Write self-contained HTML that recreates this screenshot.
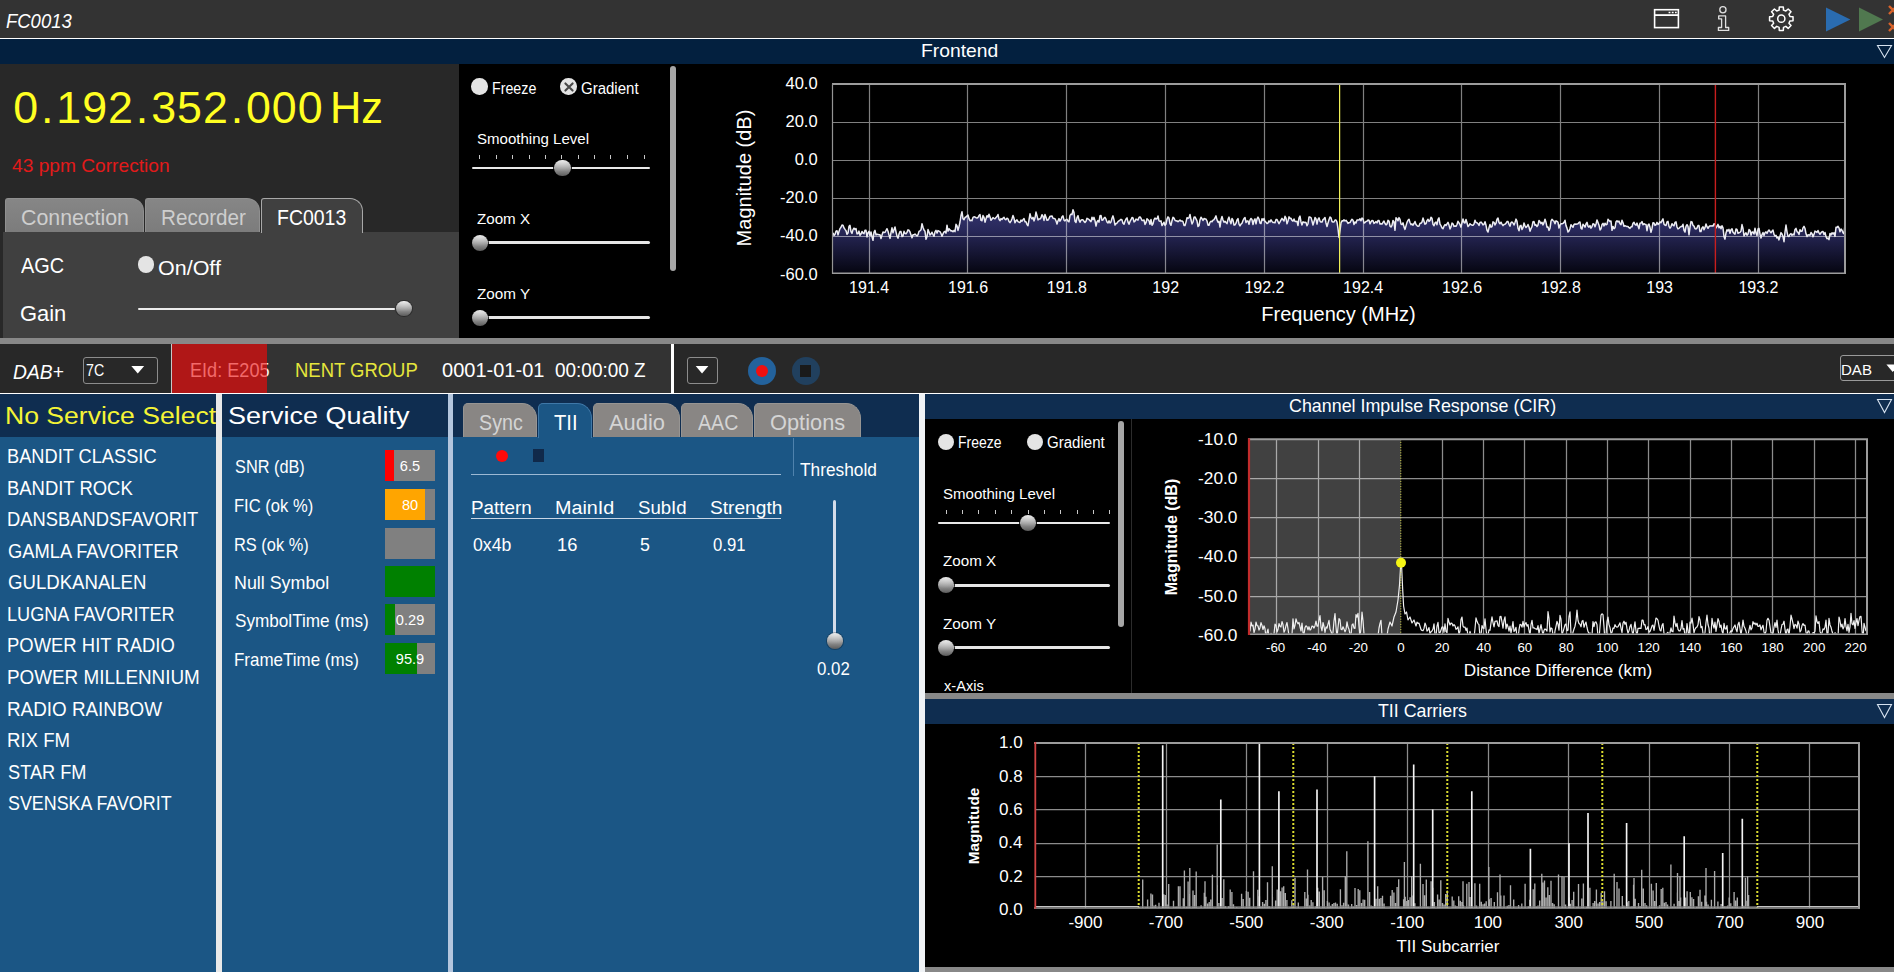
<!DOCTYPE html>
<html><head><meta charset="utf-8"><title>DAB</title><style>
html,body{margin:0;padding:0;}
body{width:1894px;height:972px;overflow:hidden;background:#000;position:relative;font-family:"Liberation Sans",sans-serif;}
#r{position:absolute;left:0;top:0;width:1894px;height:972px;overflow:hidden;background:#000;}
#r div,#r svg{position:absolute;display:block;}
#r div.t,#r span.t{position:absolute;white-space:nowrap;line-height:1;transform-origin:0 50%;}
#r div.t span{position:static;}
</style></head><body><div id="r">
<!-- sec1 -->
<div style="left:0px;top:0px;width:1894px;height:38px;background:#333;"></div>
<div style="left:0px;top:38px;width:1894px;height:1px;background:#fff;"></div>
<span class="t" style="left:6.43px;top:11.59px;font-size:19.5px;color:#fff;transform:scaleX(0.9468);font-style:italic;">FC0013</span>
<div style="left:0px;top:39px;width:1894px;height:25px;background:#03203f;"></div>
<span class="t" style="left:921.43px;top:40.92px;font-size:19px;color:#fff;transform:scaleX(1.0150);">Frontend</span>
<div style="left:0px;top:64px;width:459px;height:274px;background:#282828;"></div>
<div style="left:3px;top:232px;width:456px;height:106px;background:#404040;"></div>
<div class="t" style="left:12.78px;top:85.18px;font-size:44.8px;color:#ffff22;"><span style="display:inline-block;width:25.85px;text-align:center">0</span><span style="display:inline-block;width:17.3px;text-align:center">.</span><span style="display:inline-block;width:25.85px;text-align:center">1</span><span style="display:inline-block;width:25.85px;text-align:center">9</span><span style="display:inline-block;width:25.85px;text-align:center">2</span><span style="display:inline-block;width:17.3px;text-align:center">.</span><span style="display:inline-block;width:25.85px;text-align:center">3</span><span style="display:inline-block;width:25.85px;text-align:center">5</span><span style="display:inline-block;width:25.85px;text-align:center">2</span><span style="display:inline-block;width:17.3px;text-align:center">.</span><span style="display:inline-block;width:25.85px;text-align:center">0</span><span style="display:inline-block;width:25.85px;text-align:center">0</span><span style="display:inline-block;width:25.85px;text-align:center">0</span></div>
<span class="t" style="left:330.26px;top:85.18px;font-size:44.8px;color:#ffff22;transform:scaleX(0.9693);">Hz</span>
<span class="t" style="left:11.60px;top:155.62px;font-size:19px;color:#e21a1a;transform:scaleX(1.0084);">43 ppm Correction</span>
<div style="left:5px;top:197.9px;width:138.6px;height:34.099999999999994px;background:linear-gradient(#868686,#7c7c7c);border:1px solid #909090;border-bottom:none;border-radius:3px 13px 0 0;box-sizing:border-box;"></div>
<div style="left:144.6px;top:197.9px;width:115.20000000000002px;height:34.099999999999994px;background:linear-gradient(#868686,#7c7c7c);border:1px solid #909090;border-bottom:none;border-radius:3px 13px 0 0;box-sizing:border-box;"></div>
<div style="left:261.2px;top:197.9px;width:102.0px;height:35.099999999999994px;background:#404040;border:1px solid #a8a8a8;border-bottom:none;border-radius:3px 13px 0 0;box-sizing:border-box;"></div>
<span class="t" style="left:20.96px;top:206.92px;font-size:21.6px;color:#cecece;transform:scaleX(0.9883);">Connection</span>
<span class="t" style="left:160.53px;top:206.92px;font-size:21.6px;color:#cecece;transform:scaleX(0.9568);">Recorder</span>
<span class="t" style="left:276.82px;top:206.92px;font-size:21.6px;color:#fff;transform:scaleX(0.9016);">FC0013</span>
<span class="t" style="left:20.60px;top:254.55px;font-size:22.5px;color:#fff;transform:scaleX(0.8852);">AGC</span>
<div style="left:137.75px;top:256.25px;width:16.5px;height:16.5px;border-radius:50%;background:#e4e4e4;"></div>
<span class="t" style="left:158.03px;top:256.52px;font-size:21px;color:#fff;transform:scaleX(1.0231);">On/Off</span>
<span class="t" style="left:19.53px;top:303.05px;font-size:22.5px;color:#fff;transform:scaleX(0.9733);">Gain</span>
<div style="left:137.7px;top:307.7px;width:257.4px;height:2.7px;background:#ececec;border-radius:1.3px;"></div>
<div style="left:396.4px;top:301.1px;width:15.4px;height:15.4px;border-radius:50%;box-shadow:0 0 0 1px rgba(0,0,0,0.3);background:radial-gradient(ellipse 90% 60% at 50% 12%,rgba(255,255,255,0.35) 0%,rgba(255,255,255,0) 100%),linear-gradient(#e2e2e2 0%,#c2c2c2 22%,#989898 55%,#5c5c5c 100%);"></div>
<div style="left:471.25px;top:78.25px;width:16.5px;height:16.5px;border-radius:50%;background:#e4e4e4;"></div><span class="t" style="left:491.66px;top:80.59px;font-size:15.6px;color:#fff;transform:scaleX(0.9132);">Freeze</span><div style="left:560.35px;top:78.25px;width:16.5px;height:16.5px;border-radius:50%;background:#e4e4e4;"></div><svg style="left:562.6px;top:80.5px" width="12" height="12" viewBox="-6 -6 12 12"><path d="M-3.6 -3.6L3.6 3.6M3.6 -3.6L-3.6 3.6" stroke="#484848" stroke-width="2.1" stroke-linecap="round"/></svg><span class="t" style="left:581.08px;top:80.59px;font-size:15.6px;color:#fff;transform:scaleX(0.9627);">Gradient</span><span class="t" style="left:476.95px;top:130.80px;font-size:15px;color:#fff;transform:scaleX(1.0027);">Smoothing Level</span>
<div style="left:479px;top:155px;width:1px;height:4.2px;background:#c8c8c8;"></div>
<div style="left:496px;top:155px;width:1px;height:4.2px;background:#c8c8c8;"></div>
<div style="left:512px;top:155px;width:1px;height:4.2px;background:#c8c8c8;"></div>
<div style="left:529px;top:155px;width:1px;height:4.2px;background:#c8c8c8;"></div>
<div style="left:545px;top:155px;width:1px;height:4.2px;background:#c8c8c8;"></div>
<div style="left:561px;top:155px;width:1px;height:4.2px;background:#c8c8c8;"></div>
<div style="left:578px;top:155px;width:1px;height:4.2px;background:#c8c8c8;"></div>
<div style="left:594px;top:155px;width:1px;height:4.2px;background:#c8c8c8;"></div>
<div style="left:610px;top:155px;width:1px;height:4.2px;background:#c8c8c8;"></div>
<div style="left:627px;top:155px;width:1px;height:4.2px;background:#c8c8c8;"></div>
<div style="left:644px;top:155px;width:1px;height:4.2px;background:#c8c8c8;"></div>
<div style="left:471.6px;top:166.55px;width:178.4px;height:2.5px;background:#e8e8e8;border-radius:1.25px;"></div>
<div style="left:554.0px;top:159.7px;width:16.8px;height:16.8px;border-radius:50%;box-shadow:0 0 0 1px rgba(0,0,0,0.9);background:radial-gradient(ellipse 90% 60% at 50% 12%,rgba(255,255,255,0.35) 0%,rgba(255,255,255,0) 100%),linear-gradient(#e2e2e2 0%,#c2c2c2 22%,#989898 55%,#5c5c5c 100%);"></div>
<span class="t" style="left:476.95px;top:211.10px;font-size:15px;color:#fff;transform:scaleX(1.0106);">Zoom X</span>
<div style="left:480px;top:241.1px;width:170px;height:3px;background:#e6e6e6;border-radius:1.5px;"></div>
<div style="left:472.2px;top:235.0px;width:15.9px;height:15.9px;border-radius:50%;box-shadow:0 0 0 1px rgba(0,0,0,0.9);background:radial-gradient(ellipse 90% 60% at 50% 12%,rgba(255,255,255,0.35) 0%,rgba(255,255,255,0) 100%),linear-gradient(#e2e2e2 0%,#c2c2c2 22%,#989898 55%,#5c5c5c 100%);"></div>
<span class="t" style="left:476.94px;top:286.00px;font-size:15px;color:#fff;transform:scaleX(1.0155);">Zoom Y</span>
<div style="left:480px;top:316px;width:170px;height:3px;background:#e6e6e6;border-radius:1.5px;"></div>
<div style="left:472.2px;top:309.9px;width:15.9px;height:15.9px;border-radius:50%;box-shadow:0 0 0 1px rgba(0,0,0,0.9);background:radial-gradient(ellipse 90% 60% at 50% 12%,rgba(255,255,255,0.35) 0%,rgba(255,255,255,0) 100%),linear-gradient(#e2e2e2 0%,#c2c2c2 22%,#989898 55%,#5c5c5c 100%);"></div>
<div style="left:670.3px;top:65.8px;width:6.2px;height:205.4px;background:#a6a6a6;border-radius:3.1px;"></div>
<div style="left:0px;top:338px;width:1894px;height:6px;background:#888;"></div>
<!-- sec2 -->
<div style="left:0px;top:344px;width:1894px;height:49px;background:#282828;"></div>
<div style="left:171px;top:344px;width:1px;height:49px;background:#c8c8c8;"></div>
<div style="left:172px;top:344px;width:95.4px;height:49px;background:#b01717;"></div>
<div style="left:267.4px;top:344px;width:403.6px;height:49px;background:#333;"></div>
<div style="left:671px;top:344px;width:3.2px;height:49px;background:#fff;"></div>
<div style="left:0px;top:393px;width:1894px;height:1px;background:#fff;"></div>
<span class="t" style="left:12.64px;top:362.39px;font-size:20.8px;color:#fff;transform:scaleX(0.9254);font-style:italic;">DAB+</span>
<div style="left:83px;top:357.3px;width:75px;height:26.4px;box-sizing:border-box;border:1px solid #8c8c8c;border-radius:3px;background:#282828;"></div>
<span class="t" style="left:86.31px;top:361.57px;font-size:17.4px;color:#fff;transform:scaleX(0.8173);">7C</span>
<svg style="left:130px;top:364px" width="16" height="12" viewBox="130 364 16 12"><path d="M131.3 366H144.2L137.75 373.6Z" fill="#fff"/></svg>
<div style="left:172px;top:344px;width:95.4px;height:49px;overflow:hidden;background:none;"><span class="t" style="left:18.33px;top:16.23px;font-size:20.4px;color:#f26a6a;transform:scaleX(0.8886);">EId: E205</span></div>
<div style="left:267.4px;top:344px;width:10px;height:49px;overflow:hidden;background:none;"><span class="t" style="left:-77.07px;top:16.23px;font-size:20.4px;color:#f4f4f4;transform:scaleX(0.8886);">EId: E205</span></div>
<span class="t" style="left:294.52px;top:360.26px;font-size:20.6px;color:#e6e63c;transform:scaleX(0.8965);">NENT GROUP</span>
<span class="t" style="left:441.52px;top:360.26px;font-size:20.6px;color:#fff;transform:scaleX(0.9720);">0001-01-01</span>
<span class="t" style="left:554.86px;top:360.26px;font-size:20.6px;color:#fff;transform:scaleX(0.9212);">00:00:00 Z</span>
<div style="left:687.4px;top:357.3px;width:30.4px;height:26.4px;box-sizing:border-box;border:1px solid #8c8c8c;border-radius:3px;background:#282828;"></div>
<svg style="left:694px;top:364px" width="16" height="12" viewBox="694 364 16 12"><path d="M695.7 366H708.4L702.05 373.6Z" fill="#fff"/></svg>
<div style="left:747.9px;top:356.8px;width:28.4px;height:28.4px;border-radius:50%;background:#23629c;"></div>
<div style="left:755.8px;top:364.7px;width:12.6px;height:12.6px;border-radius:50%;background:#f01010;"></div>
<div style="left:791.5px;top:356.8px;width:28.4px;height:28.4px;border-radius:50%;background:#21405e;"></div>
<div style="left:800px;top:365.3px;width:11.4px;height:11.4px;background:#1a1a1a;"></div>
<div style="left:1839.5px;top:355.3px;width:70px;height:26.2px;box-sizing:border-box;border:1px solid #9a9a9a;border-radius:3px;background:#282828;"></div>
<span class="t" style="left:1840.80px;top:361.60px;font-size:15px;color:#fff;transform:scaleX(1.0035);">DAB</span>
<svg style="left:1884px;top:362px" width="10" height="12" viewBox="1884 362 10 12"><path d="M1886.4 364.6H1899L1892.7 372Z" fill="#fff"/></svg>
<!-- sec3 -->
<div style="left:0px;top:394px;width:216px;height:42.6px;background:#0f2d50;"></div>
<div style="left:0px;top:436.6px;width:216px;height:535.4px;background:#1b5685;"></div>
<div style="left:216px;top:394px;width:6.2px;height:578px;background:#e9e9e9;"></div>
<div style="left:222.2px;top:394px;width:226.2px;height:42.6px;background:#0f2d50;"></div>
<div style="left:222.2px;top:436.6px;width:226.2px;height:535.4px;background:#1b5685;"></div>
<div style="left:448.4px;top:394px;width:4.9px;height:578px;background:#b4c6de;"></div>
<div style="left:453.3px;top:394px;width:465.5px;height:42.6px;background:#0f2d50;"></div>
<div style="left:453.3px;top:436.6px;width:465.5px;height:535.4px;background:#1b5685;"></div>
<div style="left:918.8px;top:394px;width:6.2px;height:578px;background:#f0f3f6;"></div>
<div style="left:0;top:394px;width:216px;height:42px;overflow:hidden;background:none;"><span class="t" style="left:4.66px;top:10.21px;font-size:24.8px;color:#f4f436;transform:scaleX(1.0710);">No Service Selected</span></div>
<span class="t" style="left:227.80px;top:404.21px;font-size:24.8px;color:#fff;transform:scaleX(1.0888);">Service Quality</span>
<span class="t" style="left:7.04px;top:447.18px;font-size:19.4px;color:#fff;transform:scaleX(0.9398);">BANDIT CLASSIC</span>
<span class="t" style="left:7.03px;top:478.73px;font-size:19.4px;color:#fff;transform:scaleX(0.9510);">BANDIT ROCK</span>
<span class="t" style="left:7.03px;top:510.28px;font-size:19.4px;color:#fff;transform:scaleX(0.9458);">DANSBANDSFAVORIT</span>
<span class="t" style="left:7.60px;top:541.83px;font-size:19.4px;color:#fff;transform:scaleX(0.9444);">GAMLA FAVORITER</span>
<span class="t" style="left:7.59px;top:573.38px;font-size:19.4px;color:#fff;transform:scaleX(0.9588);">GULDKANALEN</span>
<span class="t" style="left:7.05px;top:604.93px;font-size:19.4px;color:#fff;transform:scaleX(0.9337);">LUGNA FAVORITER</span>
<span class="t" style="left:7.03px;top:636.48px;font-size:19.4px;color:#fff;transform:scaleX(0.9514);">POWER HIT RADIO</span>
<span class="t" style="left:6.99px;top:668.03px;font-size:19.4px;color:#fff;transform:scaleX(0.9723);">POWER MILLENNIUM</span>
<span class="t" style="left:6.99px;top:699.58px;font-size:19.4px;color:#fff;transform:scaleX(0.9721);">RADIO RAINBOW</span>
<span class="t" style="left:7.01px;top:731.13px;font-size:19.4px;color:#fff;transform:scaleX(0.9593);">RIX FM</span>
<span class="t" style="left:7.70px;top:762.68px;font-size:19.4px;color:#fff;transform:scaleX(0.9385);">STAR FM</span>
<span class="t" style="left:7.72px;top:794.23px;font-size:19.4px;color:#fff;transform:scaleX(0.9217);">SVENSKA FAVORIT</span>
<span class="t" style="left:234.78px;top:458.09px;font-size:18.2px;color:#fff;transform:scaleX(0.8966);">SNR (dB)</span>
<div style="left:385px;top:450px;width:49.8px;height:31px;background:#808080;"></div>
<div style="left:385px;top:450px;width:8.7px;height:31px;background:#ff0000;"></div>
<span class="t" style="left:399.78px;top:459.04px;font-size:14.6px;color:#fff;">6.5</span>
<span class="t" style="left:234.18px;top:497.29px;font-size:18.2px;color:#fff;transform:scaleX(0.9111);">FIC (ok %)</span>
<div style="left:385px;top:489.2px;width:49.8px;height:31px;background:#808080;"></div>
<div style="left:385px;top:489.2px;width:40px;height:31px;background:#ffa500;"></div>
<span class="t" style="left:401.88px;top:498.24px;font-size:14.6px;color:#fff;">80</span>
<span class="t" style="left:234.19px;top:535.99px;font-size:18.2px;color:#fff;transform:scaleX(0.9023);">RS (ok %)</span>
<div style="left:385px;top:527.9px;width:49.8px;height:31px;background:#808080;"></div>
<span class="t" style="left:234.08px;top:573.89px;font-size:18.2px;color:#fff;transform:scaleX(0.9815);">Null Symbol</span>
<div style="left:385px;top:565.8px;width:49.8px;height:31px;background:#808080;"></div>
<div style="left:385px;top:565.8px;width:49.8px;height:31px;background:#008000;"></div>
<span class="t" style="left:234.75px;top:612.09px;font-size:18.2px;color:#fff;transform:scaleX(0.9429);">SymbolTime (ms)</span>
<div style="left:385px;top:604px;width:49.8px;height:31px;background:#808080;"></div>
<div style="left:385px;top:604px;width:10px;height:31px;background:#008000;"></div>
<span class="t" style="left:395.85px;top:613.04px;font-size:14.6px;color:#fff;">0.29</span>
<span class="t" style="left:234.15px;top:650.69px;font-size:18.2px;color:#fff;transform:scaleX(0.9333);">FrameTime (ms)</span>
<div style="left:385px;top:642.6px;width:49.8px;height:31px;background:#808080;"></div>
<div style="left:385px;top:642.6px;width:32px;height:31px;background:#008000;"></div>
<span class="t" style="left:395.80px;top:651.64px;font-size:14.6px;color:#fff;">95.9</span>
<div style="left:463.1px;top:402.9px;width:74.3px;height:33.7px;background:#898684;border:1px solid #979593;border-bottom:none;border-radius:5px 15px 0 0;box-sizing:border-box;"></div>
<div style="left:593px;top:402.9px;width:87.0px;height:33.7px;background:#898684;border:1px solid #979593;border-bottom:none;border-radius:5px 15px 0 0;box-sizing:border-box;"></div>
<div style="left:681px;top:402.9px;width:71.9px;height:33.7px;background:#898684;border:1px solid #979593;border-bottom:none;border-radius:5px 15px 0 0;box-sizing:border-box;"></div>
<div style="left:753.7px;top:402.9px;width:107.3px;height:33.7px;background:#898684;border:1px solid #979593;border-bottom:none;border-radius:5px 15px 0 0;box-sizing:border-box;"></div>
<div style="left:538.1px;top:402.9px;width:54.4px;height:34.7px;background:#1b5685;border:1px solid #3f78a8;border-bottom:none;border-radius:5px 15px 0 0;box-sizing:border-box;"></div>
<span class="t" style="left:478.54px;top:411.65px;font-size:21.8px;color:#d4d4d4;transform:scaleX(0.9031);">Sync</span>
<span class="t" style="left:553.98px;top:411.65px;font-size:21.8px;color:#fff;transform:scaleX(0.9281);">TII</span>
<span class="t" style="left:609.30px;top:411.65px;font-size:21.8px;color:#d4d4d4;transform:scaleX(1.0036);">Audio</span>
<span class="t" style="left:697.80px;top:411.65px;font-size:21.8px;color:#d4d4d4;transform:scaleX(0.8990);">AAC</span>
<span class="t" style="left:769.50px;top:411.65px;font-size:21.8px;color:#d4d4d4;transform:scaleX(1.0014);">Options</span>
<div style="left:495.9px;top:449.5px;width:12px;height:12px;border-radius:50%;background:#ff0a0a;"></div>
<div style="left:533px;top:449px;width:10.8px;height:13px;background:#10294a;"></div>
<div style="left:471px;top:474px;width:310.4px;height:1px;background:#9cb9d4;"></div>
<div style="left:793.2px;top:438px;width:1px;height:37.5px;background:#4f82ad;"></div>
<span class="t" style="left:800.44px;top:459.65px;font-size:19.2px;color:#fff;transform:scaleX(0.9015);">Threshold</span>
<span class="t" style="left:470.69px;top:499.19px;font-size:18.8px;color:#fff;transform:scaleX(1.0052);">Pattern</span>
<span class="t" style="left:554.72px;top:499.19px;font-size:18.8px;color:#fff;transform:scaleX(1.0503);">MainId</span>
<span class="t" style="left:637.66px;top:499.19px;font-size:18.8px;color:#fff;transform:scaleX(0.9904);">SubId</span>
<span class="t" style="left:710.13px;top:499.19px;font-size:18.8px;color:#fff;transform:scaleX(1.0188);">Strength</span>
<div style="left:471px;top:518.4px;width:310.4px;height:1px;background:#c9d6e6;"></div>
<span class="t" style="left:473.33px;top:536.42px;font-size:18.4px;color:#fff;transform:scaleX(0.9623);">0x4b</span>
<span class="t" style="left:557.41px;top:536.42px;font-size:18.4px;color:#fff;transform:scaleX(0.9945);">16</span>
<span class="t" style="left:640.22px;top:536.42px;font-size:18.4px;color:#fff;transform:scaleX(0.9659);">5</span>
<span class="t" style="left:712.66px;top:536.42px;font-size:18.4px;color:#fff;transform:scaleX(0.9080);">0.91</span>
<div style="left:833px;top:500.4px;width:3px;height:134px;background:#d4dcea;border-radius:1.5px;"></div>
<div style="left:827.3px;top:633.4px;width:15.4px;height:15.4px;border-radius:50%;box-shadow:0 0 0 1px rgba(0,0,0,0.25);background:radial-gradient(ellipse 90% 60% at 50% 12%,rgba(255,255,255,0.35) 0%,rgba(255,255,255,0) 100%),linear-gradient(#e2e2e2 0%,#c2c2c2 22%,#989898 55%,#5c5c5c 100%);"></div>
<span class="t" style="left:816.64px;top:660.26px;font-size:18px;color:#fff;transform:scaleX(0.9357);">0.02</span>
<!-- sec4 -->
<div style="left:925px;top:394px;width:969px;height:25px;background:#0f2d50;"></div>
<span class="t" style="left:1288.93px;top:396.72px;font-size:18.4px;color:#fff;transform:scaleX(0.9714);">Channel Impulse Response (CIR)</span>
<div style="left:925px;top:693px;width:969px;height:6px;background:#888;"></div>
<div style="left:925px;top:699px;width:969px;height:25px;background:#0f2d50;"></div>
<span class="t" style="left:1378.11px;top:701.92px;font-size:18.4px;color:#fff;transform:scaleX(0.9676);">TII Carriers</span>
<div style="left:925px;top:967px;width:969px;height:5px;background:#888;"></div>
<div style="left:1131px;top:419px;width:1px;height:274px;background:#2c2c2c;"></div>
<svg style="left:1875px;top:43px" width="19" height="17" viewBox="1875 43 19 17"><path d="M1877.5 45.5H1891.5L1884.5 57.5Z" fill="none" stroke="#d6e2f0" stroke-width="1.1"/></svg>
<svg style="left:1875px;top:397px" width="19" height="18" viewBox="1875 397 19 18"><path d="M1877.5 399.5H1891.5L1884.5 412.5Z" fill="none" stroke="#d6e2f0" stroke-width="1.1"/></svg>
<svg style="left:1875px;top:702px" width="19" height="18" viewBox="1875 702 19 18"><path d="M1877.5 704.5H1891.5L1884.5 717.5Z" fill="none" stroke="#d6e2f0" stroke-width="1.1"/></svg>
<div style="left:938.00px;top:433.70px;width:16px;height:16px;border-radius:50%;background:#e4e4e4;"></div>
<span class="t" style="left:958.38px;top:434.59px;font-size:15.6px;color:#fff;transform:scaleX(0.8960);">Freeze</span>
<div style="left:1026.90px;top:433.70px;width:16px;height:16px;border-radius:50%;background:#e4e4e4;"></div>
<span class="t" style="left:1047.28px;top:434.59px;font-size:15.6px;color:#fff;transform:scaleX(0.9644);">Gradient</span>
<span class="t" style="left:943.25px;top:485.90px;font-size:15px;color:#fff;transform:scaleX(1.0027);">Smoothing Level</span>
<div style="left:946px;top:509.6px;width:1px;height:4.2px;background:#c8c8c8;"></div>
<div style="left:962px;top:509.6px;width:1px;height:4.2px;background:#c8c8c8;"></div>
<div style="left:978px;top:509.6px;width:1px;height:4.2px;background:#c8c8c8;"></div>
<div style="left:995px;top:509.6px;width:1px;height:4.2px;background:#c8c8c8;"></div>
<div style="left:1011px;top:509.6px;width:1px;height:4.2px;background:#c8c8c8;"></div>
<div style="left:1028px;top:509.6px;width:1px;height:4.2px;background:#c8c8c8;"></div>
<div style="left:1044px;top:509.6px;width:1px;height:4.2px;background:#c8c8c8;"></div>
<div style="left:1060px;top:509.6px;width:1px;height:4.2px;background:#c8c8c8;"></div>
<div style="left:1077px;top:509.6px;width:1px;height:4.2px;background:#c8c8c8;"></div>
<div style="left:1093px;top:509.6px;width:1px;height:4.2px;background:#c8c8c8;"></div>
<div style="left:1109px;top:509.6px;width:1px;height:4.2px;background:#c8c8c8;"></div>
<div style="left:938px;top:521.6px;width:172px;height:2.5px;background:#e8e8e8;border-radius:1.25px;"></div>
<div style="left:1019.7px;top:514.7px;width:16.8px;height:16.8px;border-radius:50%;box-shadow:0 0 0 1px rgba(0,0,0,0.9);background:radial-gradient(ellipse 90% 60% at 50% 12%,rgba(255,255,255,0.35) 0%,rgba(255,255,255,0) 100%),linear-gradient(#e2e2e2 0%,#c2c2c2 22%,#989898 55%,#5c5c5c 100%);"></div>
<span class="t" style="left:943.24px;top:553.30px;font-size:15px;color:#fff;transform:scaleX(1.0126);">Zoom X</span>
<div style="left:946px;top:583.8px;width:164px;height:3px;background:#e6e6e6;border-radius:1.5px;"></div>
<div style="left:938.2px;top:577.4px;width:15.9px;height:15.9px;border-radius:50%;box-shadow:0 0 0 1px rgba(0,0,0,0.9);background:radial-gradient(ellipse 90% 60% at 50% 12%,rgba(255,255,255,0.35) 0%,rgba(255,255,255,0) 100%),linear-gradient(#e2e2e2 0%,#c2c2c2 22%,#989898 55%,#5c5c5c 100%);"></div>
<span class="t" style="left:943.24px;top:616.10px;font-size:15px;color:#fff;transform:scaleX(1.0175);">Zoom Y</span>
<div style="left:946px;top:646.2px;width:164px;height:3px;background:#e6e6e6;border-radius:1.5px;"></div>
<div style="left:938.2px;top:639.9px;width:15.9px;height:15.9px;border-radius:50%;box-shadow:0 0 0 1px rgba(0,0,0,0.9);background:radial-gradient(ellipse 90% 60% at 50% 12%,rgba(255,255,255,0.35) 0%,rgba(255,255,255,0) 100%),linear-gradient(#e2e2e2 0%,#c2c2c2 22%,#989898 55%,#5c5c5c 100%);"></div>
<div style="left:925px;top:660px;width:200px;height:33px;overflow:hidden;background:none;"><span class="t" style="left:18.55px;top:17.80px;font-size:15px;color:#fff;transform:scaleX(0.9726);">x-Axis</span></div>
<div style="left:1117.7px;top:420.9px;width:6.1px;height:206.3px;background:#a6a6a6;border-radius:3px;"></div>
<!-- sec5 -->
<svg style="left:700px;top:64px" width="1194" height="274" viewBox="700 64 1194 274"><defs><linearGradient id="fg" x1="0" y1="0" x2="0" y2="1" gradientUnits="objectBoundingBox"><stop offset="0" stop-color="#34346e"/><stop offset="0.32" stop-color="#28285a"/><stop offset="1" stop-color="#050510"/></linearGradient></defs><polygon points="833,273.4 833.0,232.9 834.0,235.4 835.0,234.4 836.0,231.1 837.0,230.7 838.0,234.9 839.0,231.5 840.0,228.6 841.0,227.2 842.0,225.1 843.0,225.2 844.0,227.9 845.0,229.4 846.0,230.7 847.0,234.3 848.0,233.1 849.0,226.3 850.0,225.4 851.0,231.7 852.0,233.4 853.0,229.6 854.0,228.1 855.0,229.5 856.0,228.6 857.0,233.8 858.0,233.8 859.0,231.1 860.0,235.4 861.0,234.0 862.0,231.4 863.0,233.2 864.0,233.6 865.0,230.2 866.0,230.3 867.0,236.9 868.0,232.7 869.0,231.4 870.0,235.7 871.0,231.9 872.0,236.7 873.0,240.3 874.0,232.1 875.0,230.3 876.0,234.9 877.0,234.2 878.0,234.5 879.0,234.8 880.0,234.7 881.0,238.6 882.0,235.1 883.0,232.0 884.0,232.5 885.0,232.3 886.0,230.5 887.0,228.7 888.0,231.2 889.0,235.0 890.0,238.4 891.0,232.7 892.0,227.8 893.0,232.8 894.0,229.8 895.0,226.9 896.0,231.8 897.0,236.2 898.0,238.2 899.0,234.1 900.0,231.4 901.0,231.6 902.0,236.5 903.0,236.0 904.0,231.3 905.0,233.3 906.0,233.8 907.0,232.4 908.0,229.9 909.0,230.3 910.0,232.0 911.0,235.0 912.0,237.8 913.0,234.8 914.0,234.8 915.0,234.0 916.0,235.0 917.0,235.9 918.0,234.7 919.0,231.4 920.0,230.8 921.0,229.8 922.0,223.7 923.0,227.2 924.0,230.1 925.0,231.3 926.0,239.3 927.0,236.8 928.0,229.5 929.0,232.1 930.0,235.0 931.0,234.0 932.0,232.2 933.0,234.5 934.0,236.3 935.0,231.9 936.0,230.4 937.0,233.1 938.0,230.6 939.0,231.2 940.0,231.7 941.0,233.5 942.0,236.2 943.0,233.9 944.0,231.9 945.0,231.4 946.0,233.1 947.0,225.2 948.0,231.2 949.0,228.7 950.0,229.9 951.0,230.9 952.0,230.7 953.0,231.7 954.0,230.4 955.0,231.6 956.0,224.3 957.0,225.9 958.0,230.4 959.0,226.6 960.0,222.0 961.0,215.5 962.0,211.8 963.0,218.8 964.0,219.7 965.0,217.5 966.0,217.0 967.0,215.9 968.0,215.0 969.0,218.6 970.0,220.8 971.0,220.2 972.0,220.6 973.0,217.4 974.0,216.8 975.0,217.0 976.0,217.7 977.0,218.0 978.0,217.5 979.0,215.5 980.0,214.6 981.0,220.4 982.0,220.7 983.0,215.5 984.0,217.4 985.0,222.2 986.0,218.7 987.0,215.7 988.0,217.2 989.0,214.3 990.0,216.9 991.0,220.2 992.0,219.0 993.0,217.6 994.0,218.3 995.0,218.8 996.0,217.6 997.0,216.5 998.0,214.5 999.0,219.2 1000.0,220.6 1001.0,218.6 1002.0,219.5 1003.0,218.1 1004.0,217.2 1005.0,219.3 1006.0,219.7 1007.0,218.2 1008.0,218.8 1009.0,221.4 1010.0,222.6 1011.0,221.1 1012.0,218.7 1013.0,215.4 1014.0,218.3 1015.0,222.8 1016.0,220.7 1017.0,219.9 1018.0,221.7 1019.0,222.2 1020.0,222.5 1021.0,220.1 1022.0,221.2 1023.0,219.7 1024.0,218.5 1025.0,221.8 1026.0,221.8 1027.0,224.5 1028.0,225.7 1029.0,219.9 1030.0,213.8 1031.0,217.6 1032.0,218.9 1033.0,217.3 1034.0,220.9 1035.0,217.8 1036.0,212.1 1037.0,215.8 1038.0,219.9 1039.0,219.0 1040.0,219.0 1041.0,217.8 1042.0,214.8 1043.0,216.2 1044.0,220.4 1045.0,214.4 1046.0,217.2 1047.0,220.3 1048.0,220.1 1049.0,218.3 1050.0,216.3 1051.0,216.3 1052.0,215.9 1053.0,218.2 1054.0,218.4 1055.0,218.7 1056.0,220.9 1057.0,224.1 1058.0,220.8 1059.0,218.6 1060.0,221.1 1061.0,219.4 1062.0,216.8 1063.0,215.9 1064.0,220.1 1065.0,220.9 1066.0,219.6 1067.0,219.2 1068.0,221.3 1069.0,221.8 1070.0,215.4 1071.0,214.1 1072.0,214.6 1073.0,209.7 1074.0,212.5 1075.0,221.3 1076.0,222.4 1077.0,217.6 1078.0,215.7 1079.0,220.1 1080.0,222.2 1081.0,220.2 1082.0,219.8 1083.0,219.8 1084.0,221.4 1085.0,222.4 1086.0,221.3 1087.0,218.3 1088.0,218.8 1089.0,219.5 1090.0,220.7 1091.0,221.6 1092.0,217.2 1093.0,219.6 1094.0,217.4 1095.0,220.7 1096.0,226.0 1097.0,221.8 1098.0,220.5 1099.0,222.2 1100.0,215.7 1101.0,215.5 1102.0,220.3 1103.0,220.0 1104.0,218.1 1105.0,217.4 1106.0,219.2 1107.0,222.0 1108.0,223.0 1109.0,220.7 1110.0,223.0 1111.0,221.9 1112.0,218.3 1113.0,215.9 1114.0,219.6 1115.0,225.0 1116.0,223.7 1117.0,223.2 1118.0,221.6 1119.0,220.8 1120.0,220.1 1121.0,219.3 1122.0,219.9 1123.0,223.2 1124.0,224.2 1125.0,221.2 1126.0,219.0 1127.0,217.9 1128.0,222.1 1129.0,224.3 1130.0,221.4 1131.0,219.7 1132.0,217.5 1133.0,218.0 1134.0,221.9 1135.0,221.2 1136.0,219.1 1137.0,219.5 1138.0,220.1 1139.0,217.5 1140.0,216.9 1141.0,218.3 1142.0,220.4 1143.0,220.6 1144.0,220.0 1145.0,224.4 1146.0,222.7 1147.0,218.7 1148.0,219.7 1149.0,220.8 1150.0,224.3 1151.0,219.5 1152.0,225.2 1153.0,223.9 1154.0,219.6 1155.0,218.1 1156.0,219.1 1157.0,218.8 1158.0,216.0 1159.0,220.9 1160.0,221.3 1161.0,220.9 1162.0,225.6 1163.0,224.0 1164.0,222.2 1165.0,225.4 1166.0,224.0 1167.0,219.1 1168.0,216.9 1169.0,218.1 1170.0,223.6 1171.0,225.3 1172.0,220.7 1173.0,217.3 1174.0,218.1 1175.0,220.3 1176.0,220.9 1177.0,220.8 1178.0,221.7 1179.0,220.8 1180.0,220.1 1181.0,221.1 1182.0,221.0 1183.0,221.6 1184.0,225.4 1185.0,225.5 1186.0,222.1 1187.0,217.7 1188.0,218.4 1189.0,217.9 1190.0,214.4 1191.0,219.8 1192.0,223.9 1193.0,222.0 1194.0,217.3 1195.0,216.9 1196.0,218.9 1197.0,220.9 1198.0,226.5 1199.0,225.7 1200.0,219.9 1201.0,217.2 1202.0,218.6 1203.0,220.5 1204.0,218.5 1205.0,219.0 1206.0,219.0 1207.0,221.0 1208.0,225.2 1209.0,225.2 1210.0,222.2 1211.0,221.2 1212.0,221.8 1213.0,220.1 1214.0,219.7 1215.0,218.0 1216.0,215.9 1217.0,219.9 1218.0,222.3 1219.0,221.2 1220.0,227.0 1221.0,219.8 1222.0,216.4 1223.0,220.0 1224.0,222.3 1225.0,221.2 1226.0,222.5 1227.0,223.6 1228.0,219.3 1229.0,217.1 1230.0,221.0 1231.0,223.7 1232.0,218.5 1233.0,220.2 1234.0,225.0 1235.0,225.0 1236.0,223.2 1237.0,220.0 1238.0,218.6 1239.0,224.1 1240.0,225.9 1241.0,224.1 1242.0,223.2 1243.0,220.5 1244.0,218.5 1245.0,217.5 1246.0,222.6 1247.0,220.9 1248.0,221.1 1249.0,224.2 1250.0,220.1 1251.0,218.5 1252.0,219.6 1253.0,224.5 1254.0,220.4 1255.0,218.9 1256.0,223.8 1257.0,219.0 1258.0,217.1 1259.0,219.0 1260.0,223.2 1261.0,223.5 1262.0,218.7 1263.0,220.4 1264.0,218.5 1265.0,221.4 1266.0,222.3 1267.0,223.5 1268.0,223.0 1269.0,220.9 1270.0,222.0 1271.0,219.8 1272.0,221.4 1273.0,222.5 1274.0,222.6 1275.0,222.8 1276.0,219.6 1277.0,219.5 1278.0,221.6 1279.0,223.7 1280.0,221.9 1281.0,220.0 1282.0,218.4 1283.0,219.7 1284.0,221.0 1285.0,216.3 1286.0,218.2 1287.0,223.8 1288.0,221.0 1289.0,216.8 1290.0,218.4 1291.0,218.3 1292.0,220.4 1293.0,221.1 1294.0,219.0 1295.0,221.6 1296.0,221.6 1297.0,221.3 1298.0,225.5 1299.0,217.8 1300.0,216.1 1301.0,222.0 1302.0,224.9 1303.0,221.8 1304.0,222.4 1305.0,222.3 1306.0,222.4 1307.0,225.8 1308.0,223.7 1309.0,217.1 1310.0,217.1 1311.0,217.6 1312.0,221.0 1313.0,225.1 1314.0,221.8 1315.0,217.6 1316.0,218.8 1317.0,224.1 1318.0,219.4 1319.0,217.8 1320.0,221.1 1321.0,222.1 1322.0,222.1 1323.0,219.6 1324.0,218.8 1325.0,217.5 1326.0,223.0 1327.0,226.5 1328.0,223.0 1329.0,219.8 1330.0,217.0 1331.0,217.9 1332.0,221.5 1333.0,222.1 1334.0,222.0 1335.0,220.0 1336.0,220.0 1337.0,222.1 1338.0,228.7 1339.0,237.4 1340.0,230.7 1341.0,222.8 1342.0,220.8 1343.0,221.1 1344.0,219.8 1345.0,220.9 1346.0,220.3 1347.0,221.6 1348.0,223.4 1349.0,222.7 1350.0,222.6 1351.0,220.7 1352.0,219.3 1353.0,220.2 1354.0,224.5 1355.0,221.9 1356.0,223.0 1357.0,219.9 1358.0,220.1 1359.0,220.1 1360.0,218.8 1361.0,220.8 1362.0,218.0 1363.0,218.8 1364.0,223.1 1365.0,222.6 1366.0,221.5 1367.0,221.1 1368.0,220.1 1369.0,220.3 1370.0,223.8 1371.0,221.8 1372.0,220.5 1373.0,220.8 1374.0,223.4 1375.0,222.7 1376.0,221.6 1377.0,222.9 1378.0,220.6 1379.0,220.4 1380.0,224.1 1381.0,223.8 1382.0,224.1 1383.0,222.3 1384.0,221.1 1385.0,223.5 1386.0,224.9 1387.0,224.0 1388.0,220.3 1389.0,221.0 1390.0,226.1 1391.0,227.0 1392.0,225.3 1393.0,220.4 1394.0,221.7 1395.0,230.3 1396.0,217.8 1397.0,218.8 1398.0,220.8 1399.0,217.6 1400.0,219.3 1401.0,224.2 1402.0,224.7 1403.0,222.8 1404.0,226.9 1405.0,229.4 1406.0,225.9 1407.0,222.4 1408.0,220.2 1409.0,219.3 1410.0,222.5 1411.0,224.6 1412.0,224.0 1413.0,225.2 1414.0,223.5 1415.0,221.5 1416.0,224.4 1417.0,225.6 1418.0,226.3 1419.0,226.0 1420.0,223.3 1421.0,223.3 1422.0,222.0 1423.0,218.1 1424.0,221.2 1425.0,224.2 1426.0,223.7 1427.0,220.6 1428.0,219.3 1429.0,221.4 1430.0,220.5 1431.0,217.3 1432.0,218.3 1433.0,224.4 1434.0,225.7 1435.0,222.9 1436.0,222.1 1437.0,224.7 1438.0,219.5 1439.0,217.8 1440.0,224.2 1441.0,225.7 1442.0,227.9 1443.0,228.8 1444.0,226.2 1445.0,224.6 1446.0,225.5 1447.0,223.9 1448.0,222.3 1449.0,225.1 1450.0,228.9 1451.0,226.9 1452.0,223.1 1453.0,223.8 1454.0,226.4 1455.0,226.0 1456.0,226.3 1457.0,224.5 1458.0,221.3 1459.0,222.8 1460.0,224.7 1461.0,227.1 1462.0,222.7 1463.0,218.9 1464.0,222.5 1465.0,223.0 1466.0,219.4 1467.0,222.7 1468.0,226.6 1469.0,225.5 1470.0,223.7 1471.0,224.7 1472.0,225.2 1473.0,225.3 1474.0,224.1 1475.0,220.3 1476.0,222.5 1477.0,222.8 1478.0,223.7 1479.0,225.5 1480.0,222.5 1481.0,222.1 1482.0,223.2 1483.0,224.9 1484.0,224.3 1485.0,221.8 1486.0,225.3 1487.0,230.4 1488.0,232.0 1489.0,227.8 1490.0,224.4 1491.0,227.2 1492.0,226.6 1493.0,221.8 1494.0,222.3 1495.0,225.0 1496.0,223.2 1497.0,219.2 1498.0,218.0 1499.0,222.5 1500.0,223.8 1501.0,222.2 1502.0,224.1 1503.0,225.6 1504.0,224.5 1505.0,224.3 1506.0,223.3 1507.0,221.6 1508.0,221.4 1509.0,224.3 1510.0,226.2 1511.0,222.6 1512.0,222.0 1513.0,223.0 1514.0,225.0 1515.0,222.4 1516.0,219.1 1517.0,221.4 1518.0,228.3 1519.0,230.8 1520.0,225.8 1521.0,225.3 1522.0,229.5 1523.0,227.7 1524.0,223.0 1525.0,225.8 1526.0,227.5 1527.0,226.5 1528.0,224.5 1529.0,227.0 1530.0,231.2 1531.0,228.6 1532.0,226.7 1533.0,221.7 1534.0,221.6 1535.0,225.2 1536.0,224.8 1537.0,226.5 1538.0,225.0 1539.0,220.5 1540.0,221.8 1541.0,223.6 1542.0,222.3 1543.0,224.9 1544.0,222.6 1545.0,219.3 1546.0,222.3 1547.0,227.2 1548.0,227.0 1549.0,230.4 1550.0,228.3 1551.0,221.1 1552.0,219.3 1553.0,220.5 1554.0,221.2 1555.0,223.7 1556.0,220.8 1557.0,221.3 1558.0,222.3 1559.0,228.0 1560.0,224.9 1561.0,223.8 1562.0,223.8 1563.0,223.4 1564.0,222.4 1565.0,220.2 1566.0,225.6 1567.0,228.1 1568.0,232.0 1569.0,231.0 1570.0,228.5 1571.0,224.7 1572.0,226.1 1573.0,227.3 1574.0,224.5 1575.0,224.0 1576.0,224.3 1577.0,224.1 1578.0,223.7 1579.0,222.5 1580.0,222.0 1581.0,228.4 1582.0,229.0 1583.0,224.2 1584.0,225.4 1585.0,227.2 1586.0,224.0 1587.0,222.3 1588.0,226.2 1589.0,227.1 1590.0,225.6 1591.0,228.1 1592.0,226.6 1593.0,223.7 1594.0,224.1 1595.0,226.8 1596.0,224.0 1597.0,219.9 1598.0,222.6 1599.0,225.2 1600.0,229.9 1601.0,228.8 1602.0,224.6 1603.0,223.4 1604.0,225.9 1605.0,223.2 1606.0,224.8 1607.0,224.3 1608.0,219.3 1609.0,220.4 1610.0,221.5 1611.0,221.0 1612.0,230.3 1613.0,226.4 1614.0,228.7 1615.0,227.8 1616.0,221.8 1617.0,220.7 1618.0,221.9 1619.0,221.1 1620.0,223.7 1621.0,224.8 1622.0,220.2 1623.0,222.7 1624.0,226.3 1625.0,225.7 1626.0,226.1 1627.0,226.6 1628.0,226.5 1629.0,227.7 1630.0,228.4 1631.0,226.8 1632.0,226.8 1633.0,223.3 1634.0,222.2 1635.0,224.5 1636.0,225.2 1637.0,223.1 1638.0,225.9 1639.0,228.7 1640.0,223.2 1641.0,223.1 1642.0,221.6 1643.0,224.7 1644.0,223.8 1645.0,224.2 1646.0,224.4 1647.0,230.7 1648.0,225.1 1649.0,224.0 1650.0,227.3 1651.0,232.3 1652.0,228.5 1653.0,222.7 1654.0,223.0 1655.0,225.4 1656.0,224.8 1657.0,222.4 1658.0,224.5 1659.0,223.6 1660.0,221.8 1661.0,222.8 1662.0,220.6 1663.0,218.8 1664.0,224.2 1665.0,225.1 1666.0,225.5 1667.0,221.9 1668.0,221.3 1669.0,226.3 1670.0,228.2 1671.0,226.6 1672.0,223.8 1673.0,225.2 1674.0,225.8 1675.0,222.4 1676.0,221.9 1677.0,227.0 1678.0,228.9 1679.0,228.4 1680.0,227.1 1681.0,226.6 1682.0,226.4 1683.0,224.3 1684.0,230.3 1685.0,232.0 1686.0,226.3 1687.0,224.7 1688.0,226.3 1689.0,234.8 1690.0,227.2 1691.0,221.6 1692.0,222.0 1693.0,225.4 1694.0,226.1 1695.0,228.6 1696.0,229.0 1697.0,228.1 1698.0,225.4 1699.0,225.5 1700.0,231.6 1701.0,231.5 1702.0,227.9 1703.0,226.8 1704.0,229.7 1705.0,227.6 1706.0,224.0 1707.0,226.7 1708.0,228.3 1709.0,226.6 1710.0,225.8 1711.0,226.1 1712.0,225.8 1713.0,226.1 1714.0,223.7 1715.0,223.9 1716.0,227.9 1717.0,226.3 1718.0,224.4 1719.0,227.7 1720.0,226.3 1721.0,228.8 1722.0,225.8 1723.0,227.9 1724.0,236.7 1725.0,239.1 1726.0,232.9 1727.0,229.8 1728.0,230.9 1729.0,229.4 1730.0,233.3 1731.0,229.8 1732.0,228.8 1733.0,232.2 1734.0,233.3 1735.0,234.1 1736.0,229.0 1737.0,229.4 1738.0,233.2 1739.0,232.8 1740.0,232.4 1741.0,231.1 1742.0,224.6 1743.0,228.5 1744.0,235.9 1745.0,234.2 1746.0,232.8 1747.0,235.2 1748.0,234.1 1749.0,229.6 1750.0,230.3 1751.0,235.2 1752.0,232.1 1753.0,232.1 1754.0,234.0 1755.0,228.2 1756.0,233.0 1757.0,235.6 1758.0,229.0 1759.0,228.4 1760.0,234.1 1761.0,238.0 1762.0,234.6 1763.0,232.5 1764.0,235.5 1765.0,232.8 1766.0,231.9 1767.0,233.4 1768.0,231.2 1769.0,230.0 1770.0,231.5 1771.0,232.8 1772.0,231.2 1773.0,230.1 1774.0,234.4 1775.0,236.0 1776.0,235.4 1777.0,237.9 1778.0,237.2 1779.0,239.9 1780.0,236.3 1781.0,232.6 1782.0,233.9 1783.0,236.5 1784.0,241.7 1785.0,232.0 1786.0,225.1 1787.0,231.8 1788.0,236.3 1789.0,236.5 1790.0,234.3 1791.0,233.6 1792.0,235.4 1793.0,234.1 1794.0,235.0 1795.0,229.5 1796.0,228.4 1797.0,231.6 1798.0,232.4 1799.0,234.5 1800.0,229.7 1801.0,231.3 1802.0,231.2 1803.0,227.9 1804.0,226.3 1805.0,228.5 1806.0,233.8 1807.0,236.5 1808.0,234.8 1809.0,234.9 1810.0,235.3 1811.0,232.4 1812.0,233.8 1813.0,236.8 1814.0,234.4 1815.0,231.1 1816.0,231.6 1817.0,232.4 1818.0,230.5 1819.0,232.9 1820.0,234.2 1821.0,232.8 1822.0,231.7 1823.0,231.4 1824.0,234.5 1825.0,232.5 1826.0,236.7 1827.0,238.7 1828.0,238.1 1829.0,239.6 1830.0,233.4 1831.0,235.0 1832.0,232.7 1833.0,233.9 1834.0,232.9 1835.0,236.4 1836.0,227.3 1837.0,227.4 1838.0,226.4 1839.0,227.9 1840.0,231.7 1841.0,228.9 1842.0,230.2 1843.0,232.7 1844.0,233.8 1845.0,224.5 1845,273.4" fill="url(#fg)"/><path d="M869.5 84V273.4 M967.5 84V273.4 M1066.5 84V273.4 M1165.5 84V273.4 M1264.5 84V273.4 M1363.5 84V273.4 M1461.5 84V273.4 M1560.5 84V273.4 M1659.5 84V273.4 M1758.5 84V273.4 M833 122.5H1845 M833 160.5H1845 M833 198.5H1845 M833 236.5H1845" stroke="#fff" stroke-opacity="0.5" stroke-width="1.2" fill="none"/><polyline points="833.0,232.9 834.0,235.4 835.0,234.4 836.0,231.1 837.0,230.7 838.0,234.9 839.0,231.5 840.0,228.6 841.0,227.2 842.0,225.1 843.0,225.2 844.0,227.9 845.0,229.4 846.0,230.7 847.0,234.3 848.0,233.1 849.0,226.3 850.0,225.4 851.0,231.7 852.0,233.4 853.0,229.6 854.0,228.1 855.0,229.5 856.0,228.6 857.0,233.8 858.0,233.8 859.0,231.1 860.0,235.4 861.0,234.0 862.0,231.4 863.0,233.2 864.0,233.6 865.0,230.2 866.0,230.3 867.0,236.9 868.0,232.7 869.0,231.4 870.0,235.7 871.0,231.9 872.0,236.7 873.0,240.3 874.0,232.1 875.0,230.3 876.0,234.9 877.0,234.2 878.0,234.5 879.0,234.8 880.0,234.7 881.0,238.6 882.0,235.1 883.0,232.0 884.0,232.5 885.0,232.3 886.0,230.5 887.0,228.7 888.0,231.2 889.0,235.0 890.0,238.4 891.0,232.7 892.0,227.8 893.0,232.8 894.0,229.8 895.0,226.9 896.0,231.8 897.0,236.2 898.0,238.2 899.0,234.1 900.0,231.4 901.0,231.6 902.0,236.5 903.0,236.0 904.0,231.3 905.0,233.3 906.0,233.8 907.0,232.4 908.0,229.9 909.0,230.3 910.0,232.0 911.0,235.0 912.0,237.8 913.0,234.8 914.0,234.8 915.0,234.0 916.0,235.0 917.0,235.9 918.0,234.7 919.0,231.4 920.0,230.8 921.0,229.8 922.0,223.7 923.0,227.2 924.0,230.1 925.0,231.3 926.0,239.3 927.0,236.8 928.0,229.5 929.0,232.1 930.0,235.0 931.0,234.0 932.0,232.2 933.0,234.5 934.0,236.3 935.0,231.9 936.0,230.4 937.0,233.1 938.0,230.6 939.0,231.2 940.0,231.7 941.0,233.5 942.0,236.2 943.0,233.9 944.0,231.9 945.0,231.4 946.0,233.1 947.0,225.2 948.0,231.2 949.0,228.7 950.0,229.9 951.0,230.9 952.0,230.7 953.0,231.7 954.0,230.4 955.0,231.6 956.0,224.3 957.0,225.9 958.0,230.4 959.0,226.6 960.0,222.0 961.0,215.5 962.0,211.8 963.0,218.8 964.0,219.7 965.0,217.5 966.0,217.0 967.0,215.9 968.0,215.0 969.0,218.6 970.0,220.8 971.0,220.2 972.0,220.6 973.0,217.4 974.0,216.8 975.0,217.0 976.0,217.7 977.0,218.0 978.0,217.5 979.0,215.5 980.0,214.6 981.0,220.4 982.0,220.7 983.0,215.5 984.0,217.4 985.0,222.2 986.0,218.7 987.0,215.7 988.0,217.2 989.0,214.3 990.0,216.9 991.0,220.2 992.0,219.0 993.0,217.6 994.0,218.3 995.0,218.8 996.0,217.6 997.0,216.5 998.0,214.5 999.0,219.2 1000.0,220.6 1001.0,218.6 1002.0,219.5 1003.0,218.1 1004.0,217.2 1005.0,219.3 1006.0,219.7 1007.0,218.2 1008.0,218.8 1009.0,221.4 1010.0,222.6 1011.0,221.1 1012.0,218.7 1013.0,215.4 1014.0,218.3 1015.0,222.8 1016.0,220.7 1017.0,219.9 1018.0,221.7 1019.0,222.2 1020.0,222.5 1021.0,220.1 1022.0,221.2 1023.0,219.7 1024.0,218.5 1025.0,221.8 1026.0,221.8 1027.0,224.5 1028.0,225.7 1029.0,219.9 1030.0,213.8 1031.0,217.6 1032.0,218.9 1033.0,217.3 1034.0,220.9 1035.0,217.8 1036.0,212.1 1037.0,215.8 1038.0,219.9 1039.0,219.0 1040.0,219.0 1041.0,217.8 1042.0,214.8 1043.0,216.2 1044.0,220.4 1045.0,214.4 1046.0,217.2 1047.0,220.3 1048.0,220.1 1049.0,218.3 1050.0,216.3 1051.0,216.3 1052.0,215.9 1053.0,218.2 1054.0,218.4 1055.0,218.7 1056.0,220.9 1057.0,224.1 1058.0,220.8 1059.0,218.6 1060.0,221.1 1061.0,219.4 1062.0,216.8 1063.0,215.9 1064.0,220.1 1065.0,220.9 1066.0,219.6 1067.0,219.2 1068.0,221.3 1069.0,221.8 1070.0,215.4 1071.0,214.1 1072.0,214.6 1073.0,209.7 1074.0,212.5 1075.0,221.3 1076.0,222.4 1077.0,217.6 1078.0,215.7 1079.0,220.1 1080.0,222.2 1081.0,220.2 1082.0,219.8 1083.0,219.8 1084.0,221.4 1085.0,222.4 1086.0,221.3 1087.0,218.3 1088.0,218.8 1089.0,219.5 1090.0,220.7 1091.0,221.6 1092.0,217.2 1093.0,219.6 1094.0,217.4 1095.0,220.7 1096.0,226.0 1097.0,221.8 1098.0,220.5 1099.0,222.2 1100.0,215.7 1101.0,215.5 1102.0,220.3 1103.0,220.0 1104.0,218.1 1105.0,217.4 1106.0,219.2 1107.0,222.0 1108.0,223.0 1109.0,220.7 1110.0,223.0 1111.0,221.9 1112.0,218.3 1113.0,215.9 1114.0,219.6 1115.0,225.0 1116.0,223.7 1117.0,223.2 1118.0,221.6 1119.0,220.8 1120.0,220.1 1121.0,219.3 1122.0,219.9 1123.0,223.2 1124.0,224.2 1125.0,221.2 1126.0,219.0 1127.0,217.9 1128.0,222.1 1129.0,224.3 1130.0,221.4 1131.0,219.7 1132.0,217.5 1133.0,218.0 1134.0,221.9 1135.0,221.2 1136.0,219.1 1137.0,219.5 1138.0,220.1 1139.0,217.5 1140.0,216.9 1141.0,218.3 1142.0,220.4 1143.0,220.6 1144.0,220.0 1145.0,224.4 1146.0,222.7 1147.0,218.7 1148.0,219.7 1149.0,220.8 1150.0,224.3 1151.0,219.5 1152.0,225.2 1153.0,223.9 1154.0,219.6 1155.0,218.1 1156.0,219.1 1157.0,218.8 1158.0,216.0 1159.0,220.9 1160.0,221.3 1161.0,220.9 1162.0,225.6 1163.0,224.0 1164.0,222.2 1165.0,225.4 1166.0,224.0 1167.0,219.1 1168.0,216.9 1169.0,218.1 1170.0,223.6 1171.0,225.3 1172.0,220.7 1173.0,217.3 1174.0,218.1 1175.0,220.3 1176.0,220.9 1177.0,220.8 1178.0,221.7 1179.0,220.8 1180.0,220.1 1181.0,221.1 1182.0,221.0 1183.0,221.6 1184.0,225.4 1185.0,225.5 1186.0,222.1 1187.0,217.7 1188.0,218.4 1189.0,217.9 1190.0,214.4 1191.0,219.8 1192.0,223.9 1193.0,222.0 1194.0,217.3 1195.0,216.9 1196.0,218.9 1197.0,220.9 1198.0,226.5 1199.0,225.7 1200.0,219.9 1201.0,217.2 1202.0,218.6 1203.0,220.5 1204.0,218.5 1205.0,219.0 1206.0,219.0 1207.0,221.0 1208.0,225.2 1209.0,225.2 1210.0,222.2 1211.0,221.2 1212.0,221.8 1213.0,220.1 1214.0,219.7 1215.0,218.0 1216.0,215.9 1217.0,219.9 1218.0,222.3 1219.0,221.2 1220.0,227.0 1221.0,219.8 1222.0,216.4 1223.0,220.0 1224.0,222.3 1225.0,221.2 1226.0,222.5 1227.0,223.6 1228.0,219.3 1229.0,217.1 1230.0,221.0 1231.0,223.7 1232.0,218.5 1233.0,220.2 1234.0,225.0 1235.0,225.0 1236.0,223.2 1237.0,220.0 1238.0,218.6 1239.0,224.1 1240.0,225.9 1241.0,224.1 1242.0,223.2 1243.0,220.5 1244.0,218.5 1245.0,217.5 1246.0,222.6 1247.0,220.9 1248.0,221.1 1249.0,224.2 1250.0,220.1 1251.0,218.5 1252.0,219.6 1253.0,224.5 1254.0,220.4 1255.0,218.9 1256.0,223.8 1257.0,219.0 1258.0,217.1 1259.0,219.0 1260.0,223.2 1261.0,223.5 1262.0,218.7 1263.0,220.4 1264.0,218.5 1265.0,221.4 1266.0,222.3 1267.0,223.5 1268.0,223.0 1269.0,220.9 1270.0,222.0 1271.0,219.8 1272.0,221.4 1273.0,222.5 1274.0,222.6 1275.0,222.8 1276.0,219.6 1277.0,219.5 1278.0,221.6 1279.0,223.7 1280.0,221.9 1281.0,220.0 1282.0,218.4 1283.0,219.7 1284.0,221.0 1285.0,216.3 1286.0,218.2 1287.0,223.8 1288.0,221.0 1289.0,216.8 1290.0,218.4 1291.0,218.3 1292.0,220.4 1293.0,221.1 1294.0,219.0 1295.0,221.6 1296.0,221.6 1297.0,221.3 1298.0,225.5 1299.0,217.8 1300.0,216.1 1301.0,222.0 1302.0,224.9 1303.0,221.8 1304.0,222.4 1305.0,222.3 1306.0,222.4 1307.0,225.8 1308.0,223.7 1309.0,217.1 1310.0,217.1 1311.0,217.6 1312.0,221.0 1313.0,225.1 1314.0,221.8 1315.0,217.6 1316.0,218.8 1317.0,224.1 1318.0,219.4 1319.0,217.8 1320.0,221.1 1321.0,222.1 1322.0,222.1 1323.0,219.6 1324.0,218.8 1325.0,217.5 1326.0,223.0 1327.0,226.5 1328.0,223.0 1329.0,219.8 1330.0,217.0 1331.0,217.9 1332.0,221.5 1333.0,222.1 1334.0,222.0 1335.0,220.0 1336.0,220.0 1337.0,222.1 1338.0,228.7 1339.0,237.4 1340.0,230.7 1341.0,222.8 1342.0,220.8 1343.0,221.1 1344.0,219.8 1345.0,220.9 1346.0,220.3 1347.0,221.6 1348.0,223.4 1349.0,222.7 1350.0,222.6 1351.0,220.7 1352.0,219.3 1353.0,220.2 1354.0,224.5 1355.0,221.9 1356.0,223.0 1357.0,219.9 1358.0,220.1 1359.0,220.1 1360.0,218.8 1361.0,220.8 1362.0,218.0 1363.0,218.8 1364.0,223.1 1365.0,222.6 1366.0,221.5 1367.0,221.1 1368.0,220.1 1369.0,220.3 1370.0,223.8 1371.0,221.8 1372.0,220.5 1373.0,220.8 1374.0,223.4 1375.0,222.7 1376.0,221.6 1377.0,222.9 1378.0,220.6 1379.0,220.4 1380.0,224.1 1381.0,223.8 1382.0,224.1 1383.0,222.3 1384.0,221.1 1385.0,223.5 1386.0,224.9 1387.0,224.0 1388.0,220.3 1389.0,221.0 1390.0,226.1 1391.0,227.0 1392.0,225.3 1393.0,220.4 1394.0,221.7 1395.0,230.3 1396.0,217.8 1397.0,218.8 1398.0,220.8 1399.0,217.6 1400.0,219.3 1401.0,224.2 1402.0,224.7 1403.0,222.8 1404.0,226.9 1405.0,229.4 1406.0,225.9 1407.0,222.4 1408.0,220.2 1409.0,219.3 1410.0,222.5 1411.0,224.6 1412.0,224.0 1413.0,225.2 1414.0,223.5 1415.0,221.5 1416.0,224.4 1417.0,225.6 1418.0,226.3 1419.0,226.0 1420.0,223.3 1421.0,223.3 1422.0,222.0 1423.0,218.1 1424.0,221.2 1425.0,224.2 1426.0,223.7 1427.0,220.6 1428.0,219.3 1429.0,221.4 1430.0,220.5 1431.0,217.3 1432.0,218.3 1433.0,224.4 1434.0,225.7 1435.0,222.9 1436.0,222.1 1437.0,224.7 1438.0,219.5 1439.0,217.8 1440.0,224.2 1441.0,225.7 1442.0,227.9 1443.0,228.8 1444.0,226.2 1445.0,224.6 1446.0,225.5 1447.0,223.9 1448.0,222.3 1449.0,225.1 1450.0,228.9 1451.0,226.9 1452.0,223.1 1453.0,223.8 1454.0,226.4 1455.0,226.0 1456.0,226.3 1457.0,224.5 1458.0,221.3 1459.0,222.8 1460.0,224.7 1461.0,227.1 1462.0,222.7 1463.0,218.9 1464.0,222.5 1465.0,223.0 1466.0,219.4 1467.0,222.7 1468.0,226.6 1469.0,225.5 1470.0,223.7 1471.0,224.7 1472.0,225.2 1473.0,225.3 1474.0,224.1 1475.0,220.3 1476.0,222.5 1477.0,222.8 1478.0,223.7 1479.0,225.5 1480.0,222.5 1481.0,222.1 1482.0,223.2 1483.0,224.9 1484.0,224.3 1485.0,221.8 1486.0,225.3 1487.0,230.4 1488.0,232.0 1489.0,227.8 1490.0,224.4 1491.0,227.2 1492.0,226.6 1493.0,221.8 1494.0,222.3 1495.0,225.0 1496.0,223.2 1497.0,219.2 1498.0,218.0 1499.0,222.5 1500.0,223.8 1501.0,222.2 1502.0,224.1 1503.0,225.6 1504.0,224.5 1505.0,224.3 1506.0,223.3 1507.0,221.6 1508.0,221.4 1509.0,224.3 1510.0,226.2 1511.0,222.6 1512.0,222.0 1513.0,223.0 1514.0,225.0 1515.0,222.4 1516.0,219.1 1517.0,221.4 1518.0,228.3 1519.0,230.8 1520.0,225.8 1521.0,225.3 1522.0,229.5 1523.0,227.7 1524.0,223.0 1525.0,225.8 1526.0,227.5 1527.0,226.5 1528.0,224.5 1529.0,227.0 1530.0,231.2 1531.0,228.6 1532.0,226.7 1533.0,221.7 1534.0,221.6 1535.0,225.2 1536.0,224.8 1537.0,226.5 1538.0,225.0 1539.0,220.5 1540.0,221.8 1541.0,223.6 1542.0,222.3 1543.0,224.9 1544.0,222.6 1545.0,219.3 1546.0,222.3 1547.0,227.2 1548.0,227.0 1549.0,230.4 1550.0,228.3 1551.0,221.1 1552.0,219.3 1553.0,220.5 1554.0,221.2 1555.0,223.7 1556.0,220.8 1557.0,221.3 1558.0,222.3 1559.0,228.0 1560.0,224.9 1561.0,223.8 1562.0,223.8 1563.0,223.4 1564.0,222.4 1565.0,220.2 1566.0,225.6 1567.0,228.1 1568.0,232.0 1569.0,231.0 1570.0,228.5 1571.0,224.7 1572.0,226.1 1573.0,227.3 1574.0,224.5 1575.0,224.0 1576.0,224.3 1577.0,224.1 1578.0,223.7 1579.0,222.5 1580.0,222.0 1581.0,228.4 1582.0,229.0 1583.0,224.2 1584.0,225.4 1585.0,227.2 1586.0,224.0 1587.0,222.3 1588.0,226.2 1589.0,227.1 1590.0,225.6 1591.0,228.1 1592.0,226.6 1593.0,223.7 1594.0,224.1 1595.0,226.8 1596.0,224.0 1597.0,219.9 1598.0,222.6 1599.0,225.2 1600.0,229.9 1601.0,228.8 1602.0,224.6 1603.0,223.4 1604.0,225.9 1605.0,223.2 1606.0,224.8 1607.0,224.3 1608.0,219.3 1609.0,220.4 1610.0,221.5 1611.0,221.0 1612.0,230.3 1613.0,226.4 1614.0,228.7 1615.0,227.8 1616.0,221.8 1617.0,220.7 1618.0,221.9 1619.0,221.1 1620.0,223.7 1621.0,224.8 1622.0,220.2 1623.0,222.7 1624.0,226.3 1625.0,225.7 1626.0,226.1 1627.0,226.6 1628.0,226.5 1629.0,227.7 1630.0,228.4 1631.0,226.8 1632.0,226.8 1633.0,223.3 1634.0,222.2 1635.0,224.5 1636.0,225.2 1637.0,223.1 1638.0,225.9 1639.0,228.7 1640.0,223.2 1641.0,223.1 1642.0,221.6 1643.0,224.7 1644.0,223.8 1645.0,224.2 1646.0,224.4 1647.0,230.7 1648.0,225.1 1649.0,224.0 1650.0,227.3 1651.0,232.3 1652.0,228.5 1653.0,222.7 1654.0,223.0 1655.0,225.4 1656.0,224.8 1657.0,222.4 1658.0,224.5 1659.0,223.6 1660.0,221.8 1661.0,222.8 1662.0,220.6 1663.0,218.8 1664.0,224.2 1665.0,225.1 1666.0,225.5 1667.0,221.9 1668.0,221.3 1669.0,226.3 1670.0,228.2 1671.0,226.6 1672.0,223.8 1673.0,225.2 1674.0,225.8 1675.0,222.4 1676.0,221.9 1677.0,227.0 1678.0,228.9 1679.0,228.4 1680.0,227.1 1681.0,226.6 1682.0,226.4 1683.0,224.3 1684.0,230.3 1685.0,232.0 1686.0,226.3 1687.0,224.7 1688.0,226.3 1689.0,234.8 1690.0,227.2 1691.0,221.6 1692.0,222.0 1693.0,225.4 1694.0,226.1 1695.0,228.6 1696.0,229.0 1697.0,228.1 1698.0,225.4 1699.0,225.5 1700.0,231.6 1701.0,231.5 1702.0,227.9 1703.0,226.8 1704.0,229.7 1705.0,227.6 1706.0,224.0 1707.0,226.7 1708.0,228.3 1709.0,226.6 1710.0,225.8 1711.0,226.1 1712.0,225.8 1713.0,226.1 1714.0,223.7 1715.0,223.9 1716.0,227.9 1717.0,226.3 1718.0,224.4 1719.0,227.7 1720.0,226.3 1721.0,228.8 1722.0,225.8 1723.0,227.9 1724.0,236.7 1725.0,239.1 1726.0,232.9 1727.0,229.8 1728.0,230.9 1729.0,229.4 1730.0,233.3 1731.0,229.8 1732.0,228.8 1733.0,232.2 1734.0,233.3 1735.0,234.1 1736.0,229.0 1737.0,229.4 1738.0,233.2 1739.0,232.8 1740.0,232.4 1741.0,231.1 1742.0,224.6 1743.0,228.5 1744.0,235.9 1745.0,234.2 1746.0,232.8 1747.0,235.2 1748.0,234.1 1749.0,229.6 1750.0,230.3 1751.0,235.2 1752.0,232.1 1753.0,232.1 1754.0,234.0 1755.0,228.2 1756.0,233.0 1757.0,235.6 1758.0,229.0 1759.0,228.4 1760.0,234.1 1761.0,238.0 1762.0,234.6 1763.0,232.5 1764.0,235.5 1765.0,232.8 1766.0,231.9 1767.0,233.4 1768.0,231.2 1769.0,230.0 1770.0,231.5 1771.0,232.8 1772.0,231.2 1773.0,230.1 1774.0,234.4 1775.0,236.0 1776.0,235.4 1777.0,237.9 1778.0,237.2 1779.0,239.9 1780.0,236.3 1781.0,232.6 1782.0,233.9 1783.0,236.5 1784.0,241.7 1785.0,232.0 1786.0,225.1 1787.0,231.8 1788.0,236.3 1789.0,236.5 1790.0,234.3 1791.0,233.6 1792.0,235.4 1793.0,234.1 1794.0,235.0 1795.0,229.5 1796.0,228.4 1797.0,231.6 1798.0,232.4 1799.0,234.5 1800.0,229.7 1801.0,231.3 1802.0,231.2 1803.0,227.9 1804.0,226.3 1805.0,228.5 1806.0,233.8 1807.0,236.5 1808.0,234.8 1809.0,234.9 1810.0,235.3 1811.0,232.4 1812.0,233.8 1813.0,236.8 1814.0,234.4 1815.0,231.1 1816.0,231.6 1817.0,232.4 1818.0,230.5 1819.0,232.9 1820.0,234.2 1821.0,232.8 1822.0,231.7 1823.0,231.4 1824.0,234.5 1825.0,232.5 1826.0,236.7 1827.0,238.7 1828.0,238.1 1829.0,239.6 1830.0,233.4 1831.0,235.0 1832.0,232.7 1833.0,233.9 1834.0,232.9 1835.0,236.4 1836.0,227.3 1837.0,227.4 1838.0,226.4 1839.0,227.9 1840.0,231.7 1841.0,228.9 1842.0,230.2 1843.0,232.7 1844.0,233.8 1845.0,224.5" fill="none" stroke="#ececf2" stroke-width="1.5" stroke-linejoin="round"/><path d="M1339.6 84V273.4" stroke="#eeee58" stroke-width="1.25"/><path d="M1715.4 84V273.4" stroke="#c81e1e" stroke-width="1.4"/><path d="M832 84H1846" stroke="#9c9c9c" stroke-width="2"/><path d="M1845 84V274" stroke="#9c9c9c" stroke-width="2"/><path d="M832.5 84V274" stroke="#949494" stroke-width="1.2"/><path d="M832 273.3H1846" stroke="#9c9c9c" stroke-width="1.6"/></svg>
<span class="t" style="left:785.50px;top:75.28px;font-size:16.5px;color:#fff;">40.0</span>
<span class="t" style="left:785.50px;top:113.33px;font-size:16.5px;color:#fff;">20.0</span>
<span class="t" style="left:794.70px;top:151.38px;font-size:16.5px;color:#fff;">0.0</span>
<span class="t" style="left:780.00px;top:189.43px;font-size:16.5px;color:#fff;">-20.0</span>
<span class="t" style="left:780.00px;top:227.48px;font-size:16.5px;color:#fff;">-40.0</span>
<span class="t" style="left:780.00px;top:265.53px;font-size:16.5px;color:#fff;">-60.0</span>
<span class="t" style="left:849.10px;top:279.86px;font-size:16px;color:#fff;">191.4</span>
<span class="t" style="left:948.02px;top:279.86px;font-size:16px;color:#fff;">191.6</span>
<span class="t" style="left:1046.80px;top:279.86px;font-size:16px;color:#fff;">191.8</span>
<span class="t" style="left:1152.35px;top:279.86px;font-size:16px;color:#fff;">192</span>
<span class="t" style="left:1244.47px;top:279.86px;font-size:16px;color:#fff;">192.2</span>
<span class="t" style="left:1343.10px;top:279.86px;font-size:16px;color:#fff;">192.4</span>
<span class="t" style="left:1442.02px;top:279.86px;font-size:16px;color:#fff;">192.6</span>
<span class="t" style="left:1540.80px;top:279.86px;font-size:16px;color:#fff;">192.8</span>
<span class="t" style="left:1646.30px;top:279.86px;font-size:16px;color:#fff;">193</span>
<span class="t" style="left:1738.47px;top:279.86px;font-size:16px;color:#fff;">193.2</span>
<span class="t" style="left:1261.28px;top:303.87px;font-size:20px;color:#fff;">Frequency (MHz)</span>
<span class="t" style="left:744.40px;top:178.30px;font-size:20px;color:#fff;transform:translate(-50%,-50%) rotate(-90deg);transform-origin:50% 50%;">Magnitude (dB)</span>
<!-- sec6 -->
<svg style="left:1140px;top:420px" width="754" height="273" viewBox="1140 420 754 273"><rect x="1249" y="439.3" width="151.79999999999995" height="194.90000000000003" fill="#414141"/><path d="M1276.5 439.3V634.2 M1318.5 439.3V634.2 M1359.5 439.3V634.2 M1442.5 439.3V634.2 M1483.5 439.3V634.2 M1524.5 439.3V634.2 M1566.5 439.3V634.2 M1607.5 439.3V634.2 M1648.5 439.3V634.2 M1690.5 439.3V634.2 M1731.5 439.3V634.2 M1772.5 439.3V634.2 M1814.5 439.3V634.2 M1855.5 439.3V634.2 M1249 478.5H1867 M1249 517.5H1867 M1249 557.5H1867 M1249 596.5H1867" stroke="#fff" stroke-opacity="0.55" stroke-width="1.25" fill="none"/><clipPath id="cc"><rect x="1249" y="439.3" width="618" height="194.30000000000004"/></clipPath><polyline clip-path="url(#cc)" points="1250.0,631.4 1251.0,622.1 1252.0,625.9 1253.0,625.2 1254.0,632.5 1255.0,629.2 1256.0,622.0 1257.0,625.6 1258.0,625.8 1259.0,630.1 1260.0,627.7 1261.0,622.7 1262.0,625.4 1263.0,629.5 1264.0,625.8 1265.0,628.8 1266.0,637.8 1267.0,632.6 1268.0,629.1 1269.0,638.7 1270.0,639.2 1271.0,633.3 1272.0,634.8 1273.0,639.0 1274.0,634.0 1275.0,624.2 1276.0,625.3 1277.0,632.0 1278.0,629.5 1279.0,623.5 1280.0,626.3 1281.0,627.0 1282.0,621.5 1283.0,624.6 1284.0,632.2 1285.0,629.9 1286.0,625.6 1287.0,622.5 1288.0,628.8 1289.0,636.0 1290.0,634.2 1291.0,638.6 1292.0,634.6 1293.0,618.9 1294.0,628.9 1295.0,625.3 1296.0,618.9 1297.0,622.0 1298.0,623.8 1299.0,622.4 1300.0,626.9 1301.0,631.0 1302.0,623.0 1303.0,632.8 1304.0,633.8 1305.0,627.6 1306.0,625.8 1307.0,626.6 1308.0,629.9 1309.0,626.7 1310.0,630.2 1311.0,629.1 1312.0,626.0 1313.0,626.4 1314.0,628.1 1315.0,625.7 1316.0,621.0 1317.0,626.2 1318.0,626.1 1319.0,620.2 1320.0,615.5 1321.0,627.1 1322.0,630.8 1323.0,622.5 1324.0,626.5 1325.0,632.5 1326.0,627.0 1327.0,628.0 1328.0,624.1 1329.0,620.3 1330.0,629.2 1331.0,631.5 1332.0,634.6 1333.0,632.4 1334.0,620.8 1335.0,613.5 1336.0,627.0 1337.0,637.7 1338.0,627.5 1339.0,618.6 1340.0,619.8 1341.0,629.3 1342.0,629.8 1343.0,626.8 1344.0,628.9 1345.0,631.9 1346.0,629.4 1347.0,621.9 1348.0,627.1 1349.0,629.3 1350.0,634.2 1351.0,635.3 1352.0,625.0 1353.0,623.8 1354.0,628.2 1355.0,628.4 1356.0,614.5 1357.0,617.2 1358.0,613.4 1359.0,626.1 1360.0,635.8 1361.0,628.5 1362.0,612.0 1363.0,620.8 1364.0,634.0 1365.0,636.2 1366.0,636.2 1367.0,636.2 1368.0,636.2 1369.0,636.2 1370.0,636.2 1371.0,636.2 1372.0,636.2 1373.0,636.2 1374.0,636.2 1375.0,636.2 1376.0,636.2 1377.0,636.2 1378.0,636.2 1379.0,628.0 1380.0,623.4 1381.0,620.3 1382.0,636.2 1383.0,636.2 1384.0,636.2 1385.0,636.2 1386.0,636.2 1387.0,636.2 1388.0,629.0 1390.0,622.0 1392.0,626.0 1394.0,617.0 1396.0,612.0 1398.0,600.0 1399.5,585.0 1400.6,566.0 1401.6,566.0 1402.6,588.0 1403.6,606.0 1405.0,614.0 1406.5,612.0 1408.0,620.0 1410.0,617.0 1412.0,623.0 1414.0,620.0 1416.0,626.0 1417.0,622.1 1418.0,623.4 1419.0,623.1 1420.0,626.3 1421.0,629.5 1422.0,630.5 1423.0,630.7 1424.0,628.4 1425.0,623.0 1426.0,625.6 1427.0,631.1 1428.0,629.8 1429.0,627.5 1430.0,634.2 1431.0,631.8 1432.0,631.1 1433.0,629.1 1434.0,623.9 1435.0,634.8 1436.0,635.9 1437.0,626.1 1438.0,622.4 1439.0,632.6 1440.0,632.8 1441.0,630.0 1442.0,627.0 1443.0,626.9 1444.0,632.3 1445.0,623.8 1446.0,631.7 1447.0,632.7 1448.0,618.3 1449.0,622.0 1450.0,625.0 1451.0,623.0 1452.0,623.4 1453.0,626.0 1454.0,624.6 1455.0,625.9 1456.0,629.3 1457.0,628.6 1458.0,626.8 1459.0,634.6 1460.0,631.0 1461.0,619.5 1462.0,617.1 1463.0,626.2 1464.0,627.3 1465.0,627.0 1466.0,630.4 1467.0,628.1 1468.0,637.2 1469.0,636.7 1470.0,631.4 1471.0,635.1 1472.0,636.9 1473.0,640.3 1474.0,638.1 1475.0,628.5 1476.0,617.8 1477.0,621.3 1478.0,623.6 1479.0,624.6 1480.0,636.9 1481.0,635.2 1482.0,625.6 1483.0,627.9 1484.0,628.5 1485.0,618.9 1486.0,629.2 1487.0,637.6 1488.0,635.0 1489.0,629.8 1490.0,630.3 1491.0,622.9 1492.0,616.8 1493.0,622.6 1494.0,626.8 1495.0,621.3 1496.0,621.2 1497.0,620.8 1498.0,625.3 1499.0,626.6 1500.0,616.6 1501.0,616.4 1502.0,622.2 1503.0,628.1 1504.0,620.3 1505.0,616.8 1506.0,628.8 1507.0,624.0 1508.0,626.8 1509.0,631.1 1510.0,626.0 1511.0,633.0 1512.0,627.9 1513.0,621.6 1514.0,631.4 1515.0,630.3 1516.0,627.3 1517.0,637.6 1518.0,638.7 1519.0,629.7 1520.0,624.3 1521.0,624.7 1522.0,627.1 1523.0,621.3 1524.0,626.9 1525.0,624.0 1526.0,622.6 1527.0,626.2 1528.0,624.6 1529.0,630.1 1530.0,635.3 1531.0,624.6 1532.0,620.3 1533.0,627.8 1534.0,627.8 1535.0,628.6 1536.0,628.8 1537.0,629.6 1538.0,625.7 1539.0,633.4 1540.0,629.0 1541.0,624.6 1542.0,630.0 1543.0,635.4 1544.0,630.4 1545.0,628.9 1546.0,629.6 1547.0,631.1 1548.0,611.5 1549.0,618.4 1550.0,631.9 1551.0,627.9 1552.0,628.5 1553.0,634.7 1554.0,640.2 1555.0,630.8 1556.0,626.3 1557.0,621.4 1558.0,624.2 1559.0,630.2 1560.0,615.3 1561.0,619.2 1562.0,634.9 1563.0,631.9 1564.0,628.3 1565.0,624.7 1566.0,624.0 1567.0,630.6 1568.0,630.2 1569.0,616.3 1570.0,611.9 1571.0,634.2 1572.0,640.0 1573.0,632.2 1574.0,629.0 1575.0,626.2 1576.0,620.8 1577.0,610.1 1578.0,620.5 1579.0,623.6 1580.0,624.3 1581.0,626.8 1582.0,621.3 1583.0,620.5 1584.0,627.2 1585.0,624.2 1586.0,622.0 1587.0,627.5 1588.0,631.6 1589.0,633.6 1590.0,632.9 1591.0,642.1 1592.0,635.3 1593.0,621.5 1594.0,626.6 1595.0,622.2 1596.0,621.9 1597.0,624.7 1598.0,636.6 1599.0,639.1 1600.0,626.8 1601.0,615.2 1602.0,613.8 1603.0,614.6 1604.0,626.9 1605.0,641.8 1606.0,634.7 1607.0,621.8 1608.0,617.1 1609.0,624.6 1610.0,627.6 1611.0,633.3 1612.0,632.3 1613.0,628.0 1614.0,628.4 1615.0,624.7 1616.0,626.6 1617.0,627.2 1618.0,626.8 1619.0,624.9 1620.0,622.8 1621.0,628.2 1622.0,632.7 1623.0,623.2 1624.0,621.2 1625.0,624.3 1626.0,622.3 1627.0,628.7 1628.0,633.4 1629.0,630.6 1630.0,626.5 1631.0,624.4 1632.0,630.7 1633.0,635.7 1634.0,628.0 1635.0,621.8 1636.0,631.1 1637.0,635.9 1638.0,628.4 1639.0,628.4 1640.0,628.2 1641.0,628.5 1642.0,620.1 1643.0,620.1 1644.0,624.8 1645.0,624.7 1646.0,629.6 1647.0,628.9 1648.0,626.6 1649.0,632.2 1650.0,631.5 1651.0,629.1 1652.0,625.8 1653.0,625.1 1654.0,630.4 1655.0,624.2 1656.0,618.0 1657.0,618.7 1658.0,620.3 1659.0,626.0 1660.0,630.2 1661.0,630.9 1662.0,625.3 1663.0,623.6 1664.0,633.6 1665.0,634.3 1666.0,634.0 1667.0,633.1 1668.0,632.3 1669.0,638.1 1670.0,632.7 1671.0,627.8 1672.0,631.5 1673.0,631.8 1674.0,616.0 1675.0,622.9 1676.0,626.6 1677.0,623.3 1678.0,629.4 1679.0,630.8 1680.0,630.9 1681.0,628.6 1682.0,620.6 1683.0,629.1 1684.0,628.6 1685.0,635.4 1686.0,635.7 1687.0,623.5 1688.0,631.2 1689.0,636.8 1690.0,622.2 1691.0,623.1 1692.0,618.1 1693.0,624.3 1694.0,632.9 1695.0,629.2 1696.0,627.6 1697.0,627.0 1698.0,624.8 1699.0,616.6 1700.0,620.0 1701.0,627.7 1702.0,626.4 1703.0,633.4 1704.0,635.8 1705.0,632.4 1706.0,622.5 1707.0,615.2 1708.0,624.5 1709.0,628.2 1710.0,639.1 1711.0,635.4 1712.0,618.4 1713.0,624.3 1714.0,628.2 1715.0,622.2 1716.0,631.4 1717.0,624.9 1718.0,618.6 1719.0,621.5 1720.0,627.3 1721.0,625.0 1722.0,631.1 1723.0,634.0 1724.0,623.3 1725.0,628.8 1726.0,629.0 1727.0,625.6 1728.0,638.3 1729.0,637.0 1730.0,632.4 1731.0,630.7 1732.0,631.5 1733.0,628.5 1734.0,626.7 1735.0,625.0 1736.0,629.0 1737.0,631.8 1738.0,624.4 1739.0,622.2 1740.0,628.7 1741.0,634.8 1742.0,628.4 1743.0,620.2 1744.0,626.3 1745.0,628.3 1746.0,631.2 1747.0,636.4 1748.0,635.6 1749.0,629.9 1750.0,625.3 1751.0,629.8 1752.0,628.0 1753.0,621.7 1754.0,624.1 1755.0,623.0 1756.0,624.9 1757.0,623.2 1758.0,626.5 1759.0,626.2 1760.0,624.9 1761.0,629.9 1762.0,627.3 1763.0,625.4 1764.0,631.9 1765.0,634.3 1766.0,631.2 1767.0,620.3 1768.0,618.4 1769.0,620.2 1770.0,626.7 1771.0,633.0 1772.0,633.1 1773.0,633.7 1774.0,627.2 1775.0,622.6 1776.0,627.3 1777.0,620.1 1778.0,629.9 1779.0,635.6 1780.0,635.4 1781.0,629.6 1782.0,624.5 1783.0,624.2 1784.0,621.2 1785.0,629.1 1786.0,635.9 1787.0,629.7 1788.0,629.0 1789.0,635.7 1790.0,626.0 1791.0,615.2 1792.0,619.0 1793.0,623.4 1794.0,628.7 1795.0,624.4 1796.0,625.1 1797.0,628.1 1798.0,621.2 1799.0,624.1 1800.0,632.0 1801.0,630.5 1802.0,625.6 1803.0,623.6 1804.0,625.4 1805.0,625.1 1806.0,632.3 1807.0,635.2 1808.0,630.9 1809.0,631.1 1810.0,637.3 1811.0,638.5 1812.0,636.7 1813.0,632.5 1814.0,632.9 1815.0,631.2 1816.0,615.8 1817.0,621.6 1818.0,623.4 1819.0,621.6 1820.0,631.4 1821.0,633.7 1822.0,633.1 1823.0,628.9 1824.0,629.6 1825.0,627.3 1826.0,620.2 1827.0,633.9 1828.0,633.1 1829.0,618.4 1830.0,624.9 1831.0,627.2 1832.0,631.3 1833.0,634.4 1834.0,633.8 1835.0,632.8 1836.0,633.4 1837.0,646.2 1838.0,637.2 1839.0,617.0 1840.0,621.0 1841.0,627.0 1842.0,624.1 1843.0,628.9 1844.0,626.8 1845.0,618.7 1846.0,626.3 1847.0,630.8 1848.0,624.3 1849.0,632.4 1850.0,627.2 1851.0,613.3 1852.0,623.9 1853.0,624.8 1854.0,620.6 1855.0,628.4 1856.0,622.5 1857.0,618.5 1858.0,625.7 1859.0,620.4 1860.0,616.5 1861.0,616.3 1862.0,630.1 1863.0,640.2 1864.0,623.3 1865.0,627.2 1866.0,631.2" fill="none" stroke="#f0f0f0" stroke-width="1.2" stroke-linejoin="round"/><path d="M1400.8 439.3V634.2" stroke="#e2e250" stroke-width="1" stroke-dasharray="1 1.6"/><circle cx="1401" cy="562.8" r="5" fill="#f6f614"/><path d="M1248 439.3H1868" stroke="#9c9c9c" stroke-width="2"/><path d="M1867 439.3V635.0" stroke="#9c9c9c" stroke-width="2"/><path d="M1248 634.2H1868" stroke="#9c9c9c" stroke-width="1.5"/><path d="M1249 438.3V635.0" stroke="#c22c2c" stroke-width="2.2"/></svg>
<span class="t" style="left:1198.00px;top:430.68px;font-size:17.33px;color:#fff;">-10.0</span>
<span class="t" style="left:1198.00px;top:469.95px;font-size:17.33px;color:#fff;">-20.0</span>
<span class="t" style="left:1198.00px;top:509.22px;font-size:17.33px;color:#fff;">-30.0</span>
<span class="t" style="left:1198.00px;top:548.49px;font-size:17.33px;color:#fff;">-40.0</span>
<span class="t" style="left:1198.00px;top:587.76px;font-size:17.33px;color:#fff;">-50.0</span>
<span class="t" style="left:1198.00px;top:627.03px;font-size:17.33px;color:#fff;">-60.0</span>
<span class="t" style="left:1266.01px;top:640.62px;font-size:13.33px;color:#fff;">-60</span>
<span class="t" style="left:1307.35px;top:640.62px;font-size:13.33px;color:#fff;">-40</span>
<span class="t" style="left:1348.69px;top:640.62px;font-size:13.33px;color:#fff;">-20</span>
<span class="t" style="left:1397.18px;top:640.62px;font-size:13.33px;color:#fff;">0</span>
<span class="t" style="left:1434.71px;top:640.62px;font-size:13.33px;color:#fff;">20</span>
<span class="t" style="left:1476.23px;top:640.62px;font-size:13.33px;color:#fff;">40</span>
<span class="t" style="left:1517.39px;top:640.62px;font-size:13.33px;color:#fff;">60</span>
<span class="t" style="left:1558.79px;top:640.62px;font-size:13.33px;color:#fff;">80</span>
<span class="t" style="left:1596.20px;top:640.62px;font-size:13.33px;color:#fff;">100</span>
<span class="t" style="left:1637.54px;top:640.62px;font-size:13.33px;color:#fff;">120</span>
<span class="t" style="left:1678.88px;top:640.62px;font-size:13.33px;color:#fff;">140</span>
<span class="t" style="left:1720.22px;top:640.62px;font-size:13.33px;color:#fff;">160</span>
<span class="t" style="left:1761.56px;top:640.62px;font-size:13.33px;color:#fff;">180</span>
<span class="t" style="left:1803.08px;top:640.62px;font-size:13.33px;color:#fff;">200</span>
<span class="t" style="left:1844.41px;top:640.62px;font-size:13.33px;color:#fff;">220</span>
<span class="t" style="left:1463.83px;top:661.68px;font-size:17.15px;color:#fff;">Distance Difference (km)</span>
<span class="t" style="left:1172.20px;top:536.60px;font-size:16px;color:#fff;font-weight:bold;transform:translate(-50%,-50%) rotate(-90deg);transform-origin:50% 50%;">Magnitude (dB)</span>
<svg style="left:925px;top:724px" width="969" height="243" viewBox="925 724 969 243"><path d="M1085.5 743V908 M1166.5 743V908 M1246.5 743V908 M1327.5 743V908 M1407.5 743V908 M1488.5 743V908 M1568.5 743V908 M1649.5 743V908 M1729.5 743V908 M1809.5 743V908 M1035 776.5H1859 M1035 809.5H1859 M1035 843.5H1859 M1035 876.5H1859" stroke="#fff" stroke-opacity="0.55" stroke-width="1.25" fill="none"/><path d="M1146.0 908V907.3 M1147.6 908V899.4 M1150.9 908V893.4 M1152.5 908V894.4 M1154.1 908V905.4 M1155.7 908V904.8 M1159.0 908V902.8 M1163.8 908V894.2 M1165.4 908V894.9 M1167.1 908V904.4 M1168.7 908V883.9 M1173.5 908V900.8 M1175.2 908V907.0 M1176.8 908V906.7 M1178.4 908V886.2 M1180.0 908V886.3 M1183.3 908V898.3 M1186.5 908V906.7 M1188.1 908V881.4 M1189.7 908V893.9 M1193.0 908V890.6 M1194.6 908V894.9 M1196.2 908V871.5 M1201.1 908V905.2 M1204.3 908V892.7 M1205.9 908V896.7 M1207.6 908V903.5 M1209.2 908V902.0 M1210.8 908V899.6 M1212.4 908V874.8 M1217.3 908V885.1 M1218.9 908V902.9 M1222.1 908V897.9 M1223.8 908V879.2 M1225.4 908V906.0 M1228.6 908V906.0 M1230.2 908V889.6 M1231.9 908V891.9 M1233.5 908V904.3 M1236.7 908V907.3 M1241.6 908V893.8 M1243.2 908V898.9 M1246.4 908V891.1 M1248.1 908V891.8 M1249.7 908V897.7 M1257.8 908V889.8 M1259.4 908V896.3 M1261.0 908V906.6 M1262.6 908V901.9 M1264.3 908V903.7 M1265.9 908V900.1 M1267.5 908V882.2 M1269.1 908V906.0 M1272.4 908V897.1 M1275.6 908V900.6 M1277.2 908V889.6 M1280.5 908V891.2 M1282.1 908V887.4 M1283.7 908V886.2 M1285.3 908V892.9 M1286.9 908V900.0 M1290.2 908V907.2 M1291.8 908V900.3 M1293.4 908V905.3 M1295.0 908V877.8 M1298.3 908V902.6 M1304.8 908V892.1 M1306.4 908V898.4 M1308.0 908V894.7 M1309.6 908V905.6 M1311.2 908V900.0 M1312.9 908V902.2 M1316.1 908V906.1 M1317.7 908V887.8 M1319.3 908V891.4 M1322.6 908V876.9 M1324.2 908V890.3 M1327.4 908V901.0 M1329.1 908V902.4 M1330.7 908V905.8 M1332.3 908V904.0 M1333.9 908V903.0 M1335.5 908V902.6 M1337.2 908V903.7 M1340.4 908V889.3 M1342.0 908V905.3 M1343.6 908V902.7 M1345.3 908V876.3 M1346.9 908V903.6 M1348.5 908V904.6 M1351.7 908V904.0 M1353.4 908V906.4 M1355.0 908V887.9 M1356.6 908V905.1 M1358.2 908V889.1 M1359.8 908V890.2 M1361.5 908V902.9 M1363.1 908V899.4 M1364.7 908V899.7 M1367.9 908V902.9 M1369.6 908V892.0 M1371.2 908V905.4 M1372.8 908V906.1 M1374.4 908V907.4 M1376.0 908V898.7 M1377.7 908V886.3 M1379.3 908V898.7 M1380.9 908V898.0 M1382.5 908V895.8 M1384.1 908V903.5 M1390.6 908V895.7 M1392.2 908V889.9 M1393.9 908V892.5 M1395.5 908V903.1 M1397.1 908V887.0 M1398.7 908V879.2 M1403.6 908V899.3 M1405.2 908V896.7 M1406.8 908V900.9 M1408.4 908V899.9 M1410.1 908V897.3 M1411.7 908V876.1 M1413.3 908V895.5 M1414.9 908V903.2 M1416.5 908V907.5 M1418.2 908V907.0 M1423.0 908V884.1 M1424.6 908V895.2 M1426.3 908V879.6 M1427.9 908V906.7 M1431.1 908V881.3 M1432.7 908V887.7 M1434.4 908V902.0 M1437.6 908V894.4 M1439.2 908V899.6 M1440.8 908V880.2 M1442.5 908V903.0 M1444.1 908V904.4 M1445.7 908V894.1 M1447.3 908V890.5 M1452.2 908V896.5 M1453.8 908V900.4 M1455.4 908V905.6 M1457.0 908V905.9 M1458.7 908V896.2 M1460.3 908V900.7 M1461.9 908V901.9 M1463.5 908V905.3 M1466.8 908V883.7 M1470.0 908V897.0 M1471.6 908V905.2 M1474.9 908V883.3 M1476.5 908V905.4 M1479.7 908V883.7 M1481.3 908V901.8 M1483.0 908V904.2 M1484.6 908V903.5 M1486.2 908V901.3 M1487.8 908V906.3 M1489.4 908V899.2 M1491.1 908V898.0 M1494.3 908V902.0 M1497.5 908V892.2 M1499.2 908V906.9 M1500.8 908V895.5 M1504.0 908V895.4 M1507.3 908V905.7 M1508.9 908V905.0 M1510.5 908V885.2 M1513.7 908V899.5 M1518.6 908V905.1 M1521.8 908V903.6 M1525.1 908V883.8 M1528.3 908V906.3 M1529.9 908V899.8 M1533.2 908V889.3 M1534.8 908V883.6 M1536.4 908V906.4 M1538.0 908V905.6 M1539.7 908V900.5 M1542.9 908V882.4 M1544.5 908V880.6 M1546.1 908V897.6 M1547.8 908V887.2 M1549.4 908V895.1 M1551.0 908V880.8 M1552.6 908V903.0 M1554.2 908V904.2 M1559.1 908V907.2 M1562.3 908V906.0 M1564.0 908V877.1 M1565.6 908V904.5 M1568.8 908V897.4 M1570.4 908V903.8 M1572.1 908V900.1 M1573.7 908V891.7 M1576.9 908V906.9 M1578.5 908V884.0 M1581.8 908V898.6 M1583.4 908V883.5 M1586.6 908V906.7 M1588.3 908V905.7 M1589.9 908V887.7 M1593.1 908V902.9 M1594.7 908V901.0 M1596.4 908V889.4 M1598.0 908V903.5 M1599.6 908V902.0 M1601.2 908V892.8 M1602.8 908V901.3 M1604.5 908V891.2 M1606.1 908V901.3 M1610.9 908V901.0 M1614.2 908V873.8 M1615.8 908V906.7 M1619.0 908V888.6 M1622.3 908V896.0 M1623.9 908V905.6 M1627.1 908V902.3 M1628.8 908V900.9 M1630.4 908V907.2 M1632.0 908V906.3 M1633.6 908V884.8 M1635.2 908V898.8 M1638.5 908V902.9 M1640.1 908V906.1 M1641.7 908V869.8 M1643.3 908V888.6 M1645.0 908V903.0 M1646.6 908V905.3 M1651.4 908V883.7 M1653.1 908V890.5 M1654.7 908V900.9 M1656.3 908V883.0 M1659.5 908V905.2 M1661.2 908V888.9 M1662.8 908V887.8 M1664.4 908V902.7 M1666.0 908V901.9 M1667.6 908V904.5 M1670.9 908V864.6 M1672.5 908V906.5 M1674.1 908V903.7 M1675.7 908V906.8 M1677.4 908V892.5 M1679.0 908V900.9 M1680.6 908V897.4 M1685.5 908V897.6 M1687.1 908V891.3 M1688.7 908V906.2 M1690.3 908V892.0 M1691.9 908V897.3 M1693.6 908V898.9 M1696.8 908V906.7 M1698.4 908V896.3 M1700.0 908V889.8 M1701.7 908V901.7 M1704.9 908V895.6 M1706.5 908V901.7 M1708.1 908V904.4 M1711.4 908V899.7 M1714.6 908V870.9 M1717.9 908V901.4 M1721.1 908V903.9 M1722.7 908V907.1 M1724.3 908V906.2 M1726.0 908V906.2 M1727.6 908V905.4 M1729.2 908V897.5 M1730.8 908V903.2 M1732.4 908V906.2 M1734.1 908V892.1 M1735.7 908V900.6 M1737.3 908V897.5 M1743.8 908V905.7 M1745.4 908V877.8 M1747.0 908V900.8 M1748.6 908V894.9 M1142.7 908V879.6 M1217.2 908V844.5 M1346.8 908V851.2 M1367.9 908V841.2 M1404.4 908V862.1 M1420.4 908V863.7 M1488.8 908V867.1 M1184.4 908V870.4 M1189.8 908V867.9 M1205.0 908V881.2 M1253.5 908V871.2 M1272.3 908V866.2 M1307.5 908V869.6 M1463.0 908V881.2 M1469.0 908V882.1 M1500.0 908V874.6 M1541.8 908V873.7 M1558.5 908V874.6 M1562.0 908V876.2 M1677.5 908V872.9 M1680.0 908V876.2 M1706.0 908V867.9 M1747.6 908V876.2 M1617.0 908V882.1 M1634.0 908V877.9" stroke="#acacac" stroke-width="1.35" fill="none"/><path d="M1162.7 908V745.3 M1259.4 908V742.8 M1220.8 908V799.5 M1278.9 908V791.2 M1317.0 908V789.5 M1374.6 908V776.2 M1413.7 908V764.5 M1432.7 908V809.5 M1471.8 908V791.2 M1530.4 908V848.7 M1569.0 908V842.9 M1588.0 908V812.9 M1626.6 908V822.9 M1684.2 908V836.2 M1722.7 908V852.9 M1742.3 908V818.7" stroke="#f4f4f4" stroke-width="1.65" fill="none"/><path d="M1036 906.5H1139M1757 906.5H1858" stroke="#c4c4c4" stroke-width="1.2"/><path d="M1139 906.8H1757" stroke="#7a7a7a" stroke-width="1"/><path d="M1138.7 743V908 M1293.3 743V908 M1447.3 743V908 M1602.3 743V908 M1757.3 743V908" stroke="#dcdc30" stroke-width="2" stroke-dasharray="2 2" fill="none"/><path d="M1034 743H1860" stroke="#9c9c9c" stroke-width="2"/><path d="M1859 743V908.8" stroke="#9c9c9c" stroke-width="2"/><path d="M1034 908H1860" stroke="#9c9c9c" stroke-width="1.6"/><path d="M1035.3 742V908.8" stroke="#d24444" stroke-width="1.8"/></svg>
<span class="t" style="left:999.00px;top:901.06px;font-size:17px;color:#fff;">0.0</span>
<span class="t" style="left:999.20px;top:867.68px;font-size:17px;color:#fff;">0.2</span>
<span class="t" style="left:998.80px;top:834.30px;font-size:17px;color:#fff;">0.4</span>
<span class="t" style="left:999.05px;top:800.92px;font-size:17px;color:#fff;">0.6</span>
<span class="t" style="left:999.05px;top:767.54px;font-size:17px;color:#fff;">0.8</span>
<span class="t" style="left:999.00px;top:734.16px;font-size:17px;color:#fff;">1.0</span>
<span class="t" style="left:1068.38px;top:914.21px;font-size:17px;color:#fff;">-900</span>
<span class="t" style="left:1148.83px;top:914.21px;font-size:17px;color:#fff;">-700</span>
<span class="t" style="left:1229.28px;top:914.21px;font-size:17px;color:#fff;">-500</span>
<span class="t" style="left:1309.73px;top:914.21px;font-size:17px;color:#fff;">-300</span>
<span class="t" style="left:1390.18px;top:914.21px;font-size:17px;color:#fff;">-100</span>
<span class="t" style="left:1473.70px;top:914.21px;font-size:17px;color:#fff;">100</span>
<span class="t" style="left:1554.48px;top:914.21px;font-size:17px;color:#fff;">300</span>
<span class="t" style="left:1634.90px;top:914.21px;font-size:17px;color:#fff;">500</span>
<span class="t" style="left:1715.25px;top:914.21px;font-size:17px;color:#fff;">700</span>
<span class="t" style="left:1795.75px;top:914.21px;font-size:17px;color:#fff;">900</span>
<span class="t" style="left:1396.38px;top:938.01px;font-size:17px;color:#fff;">TII Subcarrier</span>
<span class="t" style="left:973.60px;top:825.50px;font-size:15.3px;color:#fff;font-weight:bold;transform:translate(-50%,-50%) rotate(-90deg);transform-origin:50% 50%;">Magnitude</span>
<!-- sec7 -->
<svg style="left:1640px;top:0" width="254" height="38" viewBox="1640 0 254 38"><rect x="1654.6" y="9.7" width="23.8" height="17.9" fill="none" stroke="#fff" stroke-width="1.6"/><path d="M1654.8 15.1H1678.4" stroke="#fff" stroke-width="1.8"/><path d="M1668.6 12.6h1.8M1671.8 12.6h1.8M1675 12.6h1.7" stroke="#fff" stroke-width="1.5"/><circle cx="1722.9" cy="9.8" r="3.1" fill="none" stroke="#e0e0e0" stroke-width="1.3"/><path d="M1718.7 15.9H1725.6V27.5H1728.7V30.4H1718.4V27.5H1721.6V18.9H1718.7Z" fill="none" stroke="#e0e0e0" stroke-width="1.3" stroke-linejoin="round"/><path d="M1779.10 10.08 L1779.29 6.97 L1783.31 6.97 L1783.50 10.08 L1785.84 11.05 L1788.17 8.98 L1791.02 11.83 L1788.95 14.16 L1789.92 16.50 L1793.03 16.69 L1793.03 20.71 L1789.92 20.90 L1788.95 23.24 L1791.02 25.57 L1788.17 28.42 L1785.84 26.35 L1783.50 27.32 L1783.31 30.43 L1779.29 30.43 L1779.10 27.32 L1776.76 26.35 L1774.43 28.42 L1771.58 25.57 L1773.65 23.24 L1772.68 20.90 L1769.57 20.71 L1769.57 16.69 L1772.68 16.50 L1773.65 14.16 L1771.58 11.83 L1774.43 8.98 L1776.76 11.05Z" fill="none" stroke="#fff" stroke-width="1.5" stroke-linejoin="round"/><circle cx="1781.3" cy="18.7" r="3.6" fill="none" stroke="#fff" stroke-width="1.5"/><path d="M1826 7.6L1850.4 19.4L1826 31.4Z" fill="#2a6cb0"/><path d="M1859 7.6L1883 19.4L1859 31.4Z" fill="#50784f"/><path d="M1889 6L1897 14M1897 6L1889 14M1889 23L1897 31M1897 23L1889 31" stroke="#d9632a" stroke-width="2.4"/></svg>
</div></body></html>
